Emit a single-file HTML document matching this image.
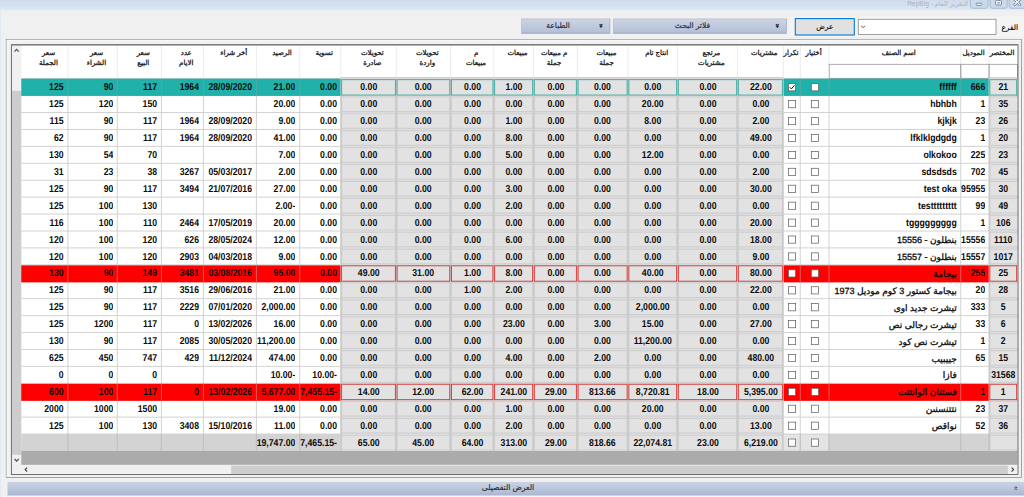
<!DOCTYPE html>
<html lang="ar"><head><meta charset="utf-8"><title>RepBig</title><style>
html,body{margin:0;padding:0;background:#f0f0f0;}
body{width:1024px;height:497px;overflow:hidden;position:relative;font-family:"Liberation Sans","DejaVu Sans",sans-serif;}
svg{position:absolute;left:0;top:0;}
.t{position:absolute;white-space:nowrap;overflow:hidden;color:#000;}
.h{font-size:7px;text-align:center;color:#151515;direction:rtl;-webkit-text-stroke:0.28px #151515;}
.d{font-size:10px;font-weight:bold;letter-spacing:0;color:#0a0a0a;transform:scaleX(0.87);text-rendering:geometricPrecision;}
.c{text-align:center;transform-origin:50% 50%;}
.r{text-align:right;transform-origin:100% 50%;}
.a{direction:rtl;text-align:right;font-weight:normal;font-size:9px;letter-spacing:0;-webkit-text-stroke:0.3px #0a0a0a;transform:none;}
.lb{font-size:7.4px;text-align:right;direction:rtl;-webkit-text-stroke:0.15px #111;width:auto}
.bt{font-size:7.2px;text-align:center;direction:rtl;-webkit-text-stroke:0.15px #111;}
.gb{font-size:7.5px;text-align:center;direction:rtl;color:#2d3342;-webkit-text-stroke:0.2px #2d3342;}
.ti{font-size:6.6px;text-align:right;color:#a9b1bf;direction:rtl;}
</style></head>
<body>
<svg width="1024" height="497" viewBox="0 0 1024 497">
<defs>
<linearGradient id="gb" x1="0" y1="0" x2="0" y2="1"><stop offset="0" stop-color="#ccd4e5"/><stop offset="0.5" stop-color="#c0c9dd"/><stop offset="1" stop-color="#b3bed5"/></linearGradient>
<linearGradient id="gc" x1="0" y1="0" x2="0" y2="1"><stop offset="0" stop-color="#cad3e4"/><stop offset="0.5" stop-color="#bcc6db"/><stop offset="1" stop-color="#a9b6d0"/></linearGradient>
<linearGradient id="gt" x1="0" y1="0" x2="0" y2="1"><stop offset="0" stop-color="#cfdbec"/><stop offset="1" stop-color="#dce6f3"/></linearGradient>
</defs>
<rect x="0.00" y="0.00" width="1024.00" height="497.00" fill="#f0f0f0" />
<rect x="0.00" y="0.00" width="1024.00" height="9.90" fill="url(#gt)" />
<rect x="0.00" y="9.90" width="1024.00" height="0.60" fill="#e8eef6" />
<rect x="0.00" y="9.50" width="0.90" height="497.00" fill="#dfe8f4" />
<path d="M970.4 -2 V6 Q970.4 8.3 972.6999999999999 8.3 H985.7 Q988 8.3 988 6 V-2 Z" fill="#cad9ec" stroke="#9fb3cf" stroke-width="0.8"/>
<path d="M990.2 -2 V6 Q990.2 8.3 992.5 8.3 H1004.9000000000001 Q1007.2 8.3 1007.2 6 V-2 Z" fill="#cad9ec" stroke="#9fb3cf" stroke-width="0.8"/>
<path d="M1009.2 -2 V6 Q1009.2 8.3 1011.5 8.3 H1027.7 Q1030 8.3 1030 6 V-2 Z" fill="#cad9ec" stroke="#9fb3cf" stroke-width="0.8"/>
<rect x="976.3" y="3.2" width="5.6" height="2.1" rx="0.6" fill="#fff" stroke="#6d7890" stroke-width="0.8"/>
<rect x="995.6" y="0.4" width="5.8" height="4.6" rx="0.8" fill="#fff" stroke="#6d7890" stroke-width="0.9"/><rect x="997.3" y="2.2" width="2.4" height="1.2" fill="#6d7890"/>
<path d="M1014.8 -0.5 L1019.8 4.6 M1019.8 -0.5 L1014.8 4.6" stroke="#6d7890" stroke-width="2.6" stroke-linecap="round"/><path d="M1014.8 -0.5 L1019.8 4.6 M1019.8 -0.5 L1014.8 4.6" stroke="#fff" stroke-width="1.2" stroke-linecap="round"/>
<rect x="790.50" y="16.50" width="234.00" height="20.50" fill="#f4f4f4" />
<rect x="858.25" y="19.25" width="137.75" height="15.25" fill="#fff" stroke="#7a7a7a" stroke-width="0.7"/>
<path d="M861.1 25.7 L863.1 27.7 L865.1 25.7" fill="none" stroke="#333" stroke-width="0.85"/>
<rect x="795.30" y="18.60" width="59.00" height="16.40" fill="#e1e1e1" stroke="#0078d7" stroke-width="1.1"/>
<rect x="613.30" y="18.90" width="173.20" height="14.30" fill="url(#gb)" stroke="#aab4c8" stroke-width="0.5"/>
<line x1="613.50" y1="33.20" x2="786.50" y2="33.20" stroke="#98a4bd" stroke-width="0.7" />
<line x1="786.40" y1="19.20" x2="786.40" y2="33.30" stroke="#a3aec5" stroke-width="0.6" />
<rect x="521.40" y="18.90" width="88.50" height="14.30" fill="url(#gb)" stroke="#aab4c8" stroke-width="0.5"/>
<line x1="521.60" y1="33.20" x2="609.90" y2="33.20" stroke="#98a4bd" stroke-width="0.7" />
<line x1="609.80" y1="19.20" x2="609.80" y2="33.30" stroke="#a3aec5" stroke-width="0.6" />
<path d="M775.90 24.10 L777.30 25.50 L778.70 24.10 M775.90 25.90 L777.30 27.30 L778.70 25.90" fill="none" stroke="#2a3040" stroke-width="1.15"/>
<path d="M599.60 24.10 L601.00 25.50 L602.40 24.10 M599.60 25.90 L601.00 27.30 L602.40 25.90" fill="none" stroke="#2a3040" stroke-width="1.15"/>
<rect x="6.25" y="39.40" width="1015.20" height="438.10" fill="#f1f1f1" stroke="#8f8f8f" stroke-width="0.8"/>
<line x1="6.90" y1="40.15" x2="1021.00" y2="40.15" stroke="#ffffff" stroke-width="0.6" />
<line x1="7.00" y1="40.00" x2="7.00" y2="477.00" stroke="#ffffff" stroke-width="0.6" />
<rect x="11.40" y="44.60" width="1006.60" height="429.90" fill="#ffffff" />
<rect x="11.90" y="45.20" width="9.35" height="429.00" fill="#f0f0f0" />
<rect x="11.90" y="90.80" width="9.35" height="364.00" fill="#cdcdcd" />
<path d="M14.5 51.6 L16.6 49.4 L18.7 51.6" fill="none" stroke="#505050" stroke-width="1.2"/>
<path d="M14.5 459 L16.6 461.2 L18.7 459" fill="none" stroke="#505050" stroke-width="1.2"/>
<rect x="21.25" y="434.06" width="996.25" height="17.22" fill="#d3d3d3" />
<rect x="340.75" y="78.70" width="442.50" height="372.28" fill="#e2e2e2" />
<rect x="989.00" y="78.70" width="28.50" height="372.28" fill="#e2e2e2" />
<rect x="783.25" y="434.06" width="45.75" height="16.92" fill="#e4e4e4" />
<line x1="67.90" y1="45.20" x2="67.90" y2="78.70" stroke="#e6e6e6" stroke-width="0.8" />
<line x1="117.25" y1="45.20" x2="117.25" y2="78.70" stroke="#e6e6e6" stroke-width="0.8" />
<line x1="161.40" y1="45.20" x2="161.40" y2="78.70" stroke="#e6e6e6" stroke-width="0.8" />
<line x1="203.40" y1="45.20" x2="203.40" y2="78.70" stroke="#e6e6e6" stroke-width="0.8" />
<line x1="256.40" y1="45.20" x2="256.40" y2="78.70" stroke="#e6e6e6" stroke-width="0.8" />
<line x1="299.75" y1="45.20" x2="299.75" y2="78.70" stroke="#e6e6e6" stroke-width="0.8" />
<line x1="340.75" y1="45.20" x2="340.75" y2="78.70" stroke="#e6e6e6" stroke-width="0.8" />
<line x1="396.25" y1="45.20" x2="396.25" y2="78.70" stroke="#e6e6e6" stroke-width="0.8" />
<line x1="450.60" y1="45.20" x2="450.60" y2="78.70" stroke="#e6e6e6" stroke-width="0.8" />
<line x1="493.75" y1="45.20" x2="493.75" y2="78.70" stroke="#e6e6e6" stroke-width="0.8" />
<line x1="533.50" y1="45.20" x2="533.50" y2="78.70" stroke="#e6e6e6" stroke-width="0.8" />
<line x1="577.25" y1="45.20" x2="577.25" y2="78.70" stroke="#e6e6e6" stroke-width="0.8" />
<line x1="628.00" y1="45.20" x2="628.00" y2="78.70" stroke="#e6e6e6" stroke-width="0.8" />
<line x1="677.50" y1="45.20" x2="677.50" y2="78.70" stroke="#e6e6e6" stroke-width="0.8" />
<line x1="737.50" y1="45.20" x2="737.50" y2="78.70" stroke="#e6e6e6" stroke-width="0.8" />
<line x1="783.25" y1="45.20" x2="783.25" y2="78.70" stroke="#e6e6e6" stroke-width="0.8" />
<line x1="800.25" y1="45.20" x2="800.25" y2="78.70" stroke="#e6e6e6" stroke-width="0.8" />
<line x1="829.00" y1="45.20" x2="829.00" y2="64.20" stroke="#e6e6e6" stroke-width="0.8" />
<line x1="960.75" y1="45.20" x2="960.75" y2="64.20" stroke="#e6e6e6" stroke-width="0.8" />
<line x1="989.00" y1="45.20" x2="989.00" y2="64.20" stroke="#e6e6e6" stroke-width="0.8" />
<rect x="829.20" y="64.30" width="131.55" height="14.00" fill="#fff" stroke="#989898" stroke-width="0.8"/>
<rect x="960.95" y="64.30" width="28.05" height="14.00" fill="#fff" stroke="#989898" stroke-width="0.8"/>
<rect x="989.20" y="64.30" width="28.30" height="14.00" fill="#fff" stroke="#989898" stroke-width="0.8"/>
<line x1="21.25" y1="78.70" x2="1017.50" y2="78.70" stroke="#9a9a9a" stroke-width="0.6" />
<line x1="21.25" y1="95.62" x2="1017.50" y2="95.62" stroke="#d2d2d2" stroke-width="1.0" />
<line x1="21.25" y1="112.54" x2="1017.50" y2="112.54" stroke="#d2d2d2" stroke-width="1.0" />
<line x1="21.25" y1="129.47" x2="1017.50" y2="129.47" stroke="#d2d2d2" stroke-width="1.0" />
<line x1="21.25" y1="146.39" x2="1017.50" y2="146.39" stroke="#d2d2d2" stroke-width="1.0" />
<line x1="21.25" y1="163.31" x2="1017.50" y2="163.31" stroke="#d2d2d2" stroke-width="1.0" />
<line x1="21.25" y1="180.23" x2="1017.50" y2="180.23" stroke="#d2d2d2" stroke-width="1.0" />
<line x1="21.25" y1="197.15" x2="1017.50" y2="197.15" stroke="#d2d2d2" stroke-width="1.0" />
<line x1="21.25" y1="214.08" x2="1017.50" y2="214.08" stroke="#d2d2d2" stroke-width="1.0" />
<line x1="21.25" y1="231.00" x2="1017.50" y2="231.00" stroke="#d2d2d2" stroke-width="1.0" />
<line x1="21.25" y1="247.92" x2="1017.50" y2="247.92" stroke="#d2d2d2" stroke-width="1.0" />
<line x1="21.25" y1="264.84" x2="1017.50" y2="264.84" stroke="#d2d2d2" stroke-width="1.0" />
<line x1="21.25" y1="281.76" x2="1017.50" y2="281.76" stroke="#d2d2d2" stroke-width="1.0" />
<line x1="21.25" y1="298.69" x2="1017.50" y2="298.69" stroke="#d2d2d2" stroke-width="1.0" />
<line x1="21.25" y1="315.61" x2="1017.50" y2="315.61" stroke="#d2d2d2" stroke-width="1.0" />
<line x1="21.25" y1="332.53" x2="1017.50" y2="332.53" stroke="#d2d2d2" stroke-width="1.0" />
<line x1="21.25" y1="349.45" x2="1017.50" y2="349.45" stroke="#d2d2d2" stroke-width="1.0" />
<line x1="21.25" y1="366.37" x2="1017.50" y2="366.37" stroke="#d2d2d2" stroke-width="1.0" />
<line x1="21.25" y1="383.30" x2="1017.50" y2="383.30" stroke="#d2d2d2" stroke-width="1.0" />
<line x1="21.25" y1="400.22" x2="1017.50" y2="400.22" stroke="#d2d2d2" stroke-width="1.0" />
<line x1="21.25" y1="417.14" x2="1017.50" y2="417.14" stroke="#d2d2d2" stroke-width="1.0" />
<line x1="21.25" y1="434.06" x2="1017.50" y2="434.06" stroke="#d2d2d2" stroke-width="1.0" />
<line x1="21.25" y1="450.98" x2="1017.50" y2="450.98" stroke="#d2d2d2" stroke-width="1.0" />
<line x1="67.90" y1="78.70" x2="67.90" y2="450.98" stroke="#d2d2d2" stroke-width="1.0" />
<line x1="117.25" y1="78.70" x2="117.25" y2="450.98" stroke="#d2d2d2" stroke-width="1.0" />
<line x1="161.40" y1="78.70" x2="161.40" y2="450.98" stroke="#d2d2d2" stroke-width="1.0" />
<line x1="203.40" y1="78.70" x2="203.40" y2="450.98" stroke="#d2d2d2" stroke-width="1.0" />
<line x1="256.40" y1="78.70" x2="256.40" y2="450.98" stroke="#d2d2d2" stroke-width="1.0" />
<line x1="299.75" y1="78.70" x2="299.75" y2="450.98" stroke="#d2d2d2" stroke-width="1.0" />
<line x1="340.75" y1="78.70" x2="340.75" y2="450.98" stroke="#d2d2d2" stroke-width="1.0" />
<line x1="396.25" y1="78.70" x2="396.25" y2="450.98" stroke="#d2d2d2" stroke-width="1.0" />
<line x1="450.60" y1="78.70" x2="450.60" y2="450.98" stroke="#d2d2d2" stroke-width="1.0" />
<line x1="493.75" y1="78.70" x2="493.75" y2="450.98" stroke="#d2d2d2" stroke-width="1.0" />
<line x1="533.50" y1="78.70" x2="533.50" y2="450.98" stroke="#d2d2d2" stroke-width="1.0" />
<line x1="577.25" y1="78.70" x2="577.25" y2="450.98" stroke="#d2d2d2" stroke-width="1.0" />
<line x1="628.00" y1="78.70" x2="628.00" y2="450.98" stroke="#d2d2d2" stroke-width="1.0" />
<line x1="677.50" y1="78.70" x2="677.50" y2="450.98" stroke="#d2d2d2" stroke-width="1.0" />
<line x1="737.50" y1="78.70" x2="737.50" y2="450.98" stroke="#d2d2d2" stroke-width="1.0" />
<line x1="783.25" y1="78.70" x2="783.25" y2="450.98" stroke="#d2d2d2" stroke-width="1.0" />
<line x1="800.25" y1="78.70" x2="800.25" y2="450.98" stroke="#d2d2d2" stroke-width="1.0" />
<line x1="829.00" y1="78.70" x2="829.00" y2="450.98" stroke="#d2d2d2" stroke-width="1.0" />
<line x1="960.75" y1="78.70" x2="960.75" y2="450.98" stroke="#d2d2d2" stroke-width="1.0" />
<line x1="989.00" y1="78.70" x2="989.00" y2="450.98" stroke="#d2d2d2" stroke-width="1.0" />
<line x1="340.75" y1="78.80" x2="783.25" y2="78.80" stroke="#cecece" stroke-width="3.4" />
<line x1="340.75" y1="78.80" x2="783.25" y2="78.80" stroke="#dcdcdc" stroke-width="1.5" />
<line x1="989.00" y1="78.80" x2="1017.50" y2="78.80" stroke="#cecece" stroke-width="3.4" />
<line x1="989.00" y1="78.80" x2="1017.50" y2="78.80" stroke="#dcdcdc" stroke-width="1.5" />
<line x1="340.75" y1="95.72" x2="783.25" y2="95.72" stroke="#cecece" stroke-width="3.4" />
<line x1="340.75" y1="95.72" x2="783.25" y2="95.72" stroke="#dcdcdc" stroke-width="1.5" />
<line x1="989.00" y1="95.72" x2="1017.50" y2="95.72" stroke="#cecece" stroke-width="3.4" />
<line x1="989.00" y1="95.72" x2="1017.50" y2="95.72" stroke="#dcdcdc" stroke-width="1.5" />
<line x1="340.75" y1="112.64" x2="783.25" y2="112.64" stroke="#cecece" stroke-width="3.4" />
<line x1="340.75" y1="112.64" x2="783.25" y2="112.64" stroke="#dcdcdc" stroke-width="1.5" />
<line x1="989.00" y1="112.64" x2="1017.50" y2="112.64" stroke="#cecece" stroke-width="3.4" />
<line x1="989.00" y1="112.64" x2="1017.50" y2="112.64" stroke="#dcdcdc" stroke-width="1.5" />
<line x1="340.75" y1="129.57" x2="783.25" y2="129.57" stroke="#cecece" stroke-width="3.4" />
<line x1="340.75" y1="129.57" x2="783.25" y2="129.57" stroke="#dcdcdc" stroke-width="1.5" />
<line x1="989.00" y1="129.57" x2="1017.50" y2="129.57" stroke="#cecece" stroke-width="3.4" />
<line x1="989.00" y1="129.57" x2="1017.50" y2="129.57" stroke="#dcdcdc" stroke-width="1.5" />
<line x1="340.75" y1="146.49" x2="783.25" y2="146.49" stroke="#cecece" stroke-width="3.4" />
<line x1="340.75" y1="146.49" x2="783.25" y2="146.49" stroke="#dcdcdc" stroke-width="1.5" />
<line x1="989.00" y1="146.49" x2="1017.50" y2="146.49" stroke="#cecece" stroke-width="3.4" />
<line x1="989.00" y1="146.49" x2="1017.50" y2="146.49" stroke="#dcdcdc" stroke-width="1.5" />
<line x1="340.75" y1="163.41" x2="783.25" y2="163.41" stroke="#cecece" stroke-width="3.4" />
<line x1="340.75" y1="163.41" x2="783.25" y2="163.41" stroke="#dcdcdc" stroke-width="1.5" />
<line x1="989.00" y1="163.41" x2="1017.50" y2="163.41" stroke="#cecece" stroke-width="3.4" />
<line x1="989.00" y1="163.41" x2="1017.50" y2="163.41" stroke="#dcdcdc" stroke-width="1.5" />
<line x1="340.75" y1="180.33" x2="783.25" y2="180.33" stroke="#cecece" stroke-width="3.4" />
<line x1="340.75" y1="180.33" x2="783.25" y2="180.33" stroke="#dcdcdc" stroke-width="1.5" />
<line x1="989.00" y1="180.33" x2="1017.50" y2="180.33" stroke="#cecece" stroke-width="3.4" />
<line x1="989.00" y1="180.33" x2="1017.50" y2="180.33" stroke="#dcdcdc" stroke-width="1.5" />
<line x1="340.75" y1="197.25" x2="783.25" y2="197.25" stroke="#cecece" stroke-width="3.4" />
<line x1="340.75" y1="197.25" x2="783.25" y2="197.25" stroke="#dcdcdc" stroke-width="1.5" />
<line x1="989.00" y1="197.25" x2="1017.50" y2="197.25" stroke="#cecece" stroke-width="3.4" />
<line x1="989.00" y1="197.25" x2="1017.50" y2="197.25" stroke="#dcdcdc" stroke-width="1.5" />
<line x1="340.75" y1="214.18" x2="783.25" y2="214.18" stroke="#cecece" stroke-width="3.4" />
<line x1="340.75" y1="214.18" x2="783.25" y2="214.18" stroke="#dcdcdc" stroke-width="1.5" />
<line x1="989.00" y1="214.18" x2="1017.50" y2="214.18" stroke="#cecece" stroke-width="3.4" />
<line x1="989.00" y1="214.18" x2="1017.50" y2="214.18" stroke="#dcdcdc" stroke-width="1.5" />
<line x1="340.75" y1="231.10" x2="783.25" y2="231.10" stroke="#cecece" stroke-width="3.4" />
<line x1="340.75" y1="231.10" x2="783.25" y2="231.10" stroke="#dcdcdc" stroke-width="1.5" />
<line x1="989.00" y1="231.10" x2="1017.50" y2="231.10" stroke="#cecece" stroke-width="3.4" />
<line x1="989.00" y1="231.10" x2="1017.50" y2="231.10" stroke="#dcdcdc" stroke-width="1.5" />
<line x1="340.75" y1="248.02" x2="783.25" y2="248.02" stroke="#cecece" stroke-width="3.4" />
<line x1="340.75" y1="248.02" x2="783.25" y2="248.02" stroke="#dcdcdc" stroke-width="1.5" />
<line x1="989.00" y1="248.02" x2="1017.50" y2="248.02" stroke="#cecece" stroke-width="3.4" />
<line x1="989.00" y1="248.02" x2="1017.50" y2="248.02" stroke="#dcdcdc" stroke-width="1.5" />
<line x1="340.75" y1="264.94" x2="783.25" y2="264.94" stroke="#cecece" stroke-width="3.4" />
<line x1="340.75" y1="264.94" x2="783.25" y2="264.94" stroke="#dcdcdc" stroke-width="1.5" />
<line x1="989.00" y1="264.94" x2="1017.50" y2="264.94" stroke="#cecece" stroke-width="3.4" />
<line x1="989.00" y1="264.94" x2="1017.50" y2="264.94" stroke="#dcdcdc" stroke-width="1.5" />
<line x1="340.75" y1="281.86" x2="783.25" y2="281.86" stroke="#cecece" stroke-width="3.4" />
<line x1="340.75" y1="281.86" x2="783.25" y2="281.86" stroke="#dcdcdc" stroke-width="1.5" />
<line x1="989.00" y1="281.86" x2="1017.50" y2="281.86" stroke="#cecece" stroke-width="3.4" />
<line x1="989.00" y1="281.86" x2="1017.50" y2="281.86" stroke="#dcdcdc" stroke-width="1.5" />
<line x1="340.75" y1="298.79" x2="783.25" y2="298.79" stroke="#cecece" stroke-width="3.4" />
<line x1="340.75" y1="298.79" x2="783.25" y2="298.79" stroke="#dcdcdc" stroke-width="1.5" />
<line x1="989.00" y1="298.79" x2="1017.50" y2="298.79" stroke="#cecece" stroke-width="3.4" />
<line x1="989.00" y1="298.79" x2="1017.50" y2="298.79" stroke="#dcdcdc" stroke-width="1.5" />
<line x1="340.75" y1="315.71" x2="783.25" y2="315.71" stroke="#cecece" stroke-width="3.4" />
<line x1="340.75" y1="315.71" x2="783.25" y2="315.71" stroke="#dcdcdc" stroke-width="1.5" />
<line x1="989.00" y1="315.71" x2="1017.50" y2="315.71" stroke="#cecece" stroke-width="3.4" />
<line x1="989.00" y1="315.71" x2="1017.50" y2="315.71" stroke="#dcdcdc" stroke-width="1.5" />
<line x1="340.75" y1="332.63" x2="783.25" y2="332.63" stroke="#cecece" stroke-width="3.4" />
<line x1="340.75" y1="332.63" x2="783.25" y2="332.63" stroke="#dcdcdc" stroke-width="1.5" />
<line x1="989.00" y1="332.63" x2="1017.50" y2="332.63" stroke="#cecece" stroke-width="3.4" />
<line x1="989.00" y1="332.63" x2="1017.50" y2="332.63" stroke="#dcdcdc" stroke-width="1.5" />
<line x1="340.75" y1="349.55" x2="783.25" y2="349.55" stroke="#cecece" stroke-width="3.4" />
<line x1="340.75" y1="349.55" x2="783.25" y2="349.55" stroke="#dcdcdc" stroke-width="1.5" />
<line x1="989.00" y1="349.55" x2="1017.50" y2="349.55" stroke="#cecece" stroke-width="3.4" />
<line x1="989.00" y1="349.55" x2="1017.50" y2="349.55" stroke="#dcdcdc" stroke-width="1.5" />
<line x1="340.75" y1="366.47" x2="783.25" y2="366.47" stroke="#cecece" stroke-width="3.4" />
<line x1="340.75" y1="366.47" x2="783.25" y2="366.47" stroke="#dcdcdc" stroke-width="1.5" />
<line x1="989.00" y1="366.47" x2="1017.50" y2="366.47" stroke="#cecece" stroke-width="3.4" />
<line x1="989.00" y1="366.47" x2="1017.50" y2="366.47" stroke="#dcdcdc" stroke-width="1.5" />
<line x1="340.75" y1="383.40" x2="783.25" y2="383.40" stroke="#cecece" stroke-width="3.4" />
<line x1="340.75" y1="383.40" x2="783.25" y2="383.40" stroke="#dcdcdc" stroke-width="1.5" />
<line x1="989.00" y1="383.40" x2="1017.50" y2="383.40" stroke="#cecece" stroke-width="3.4" />
<line x1="989.00" y1="383.40" x2="1017.50" y2="383.40" stroke="#dcdcdc" stroke-width="1.5" />
<line x1="340.75" y1="400.32" x2="783.25" y2="400.32" stroke="#cecece" stroke-width="3.4" />
<line x1="340.75" y1="400.32" x2="783.25" y2="400.32" stroke="#dcdcdc" stroke-width="1.5" />
<line x1="989.00" y1="400.32" x2="1017.50" y2="400.32" stroke="#cecece" stroke-width="3.4" />
<line x1="989.00" y1="400.32" x2="1017.50" y2="400.32" stroke="#dcdcdc" stroke-width="1.5" />
<line x1="340.75" y1="417.24" x2="783.25" y2="417.24" stroke="#cecece" stroke-width="3.4" />
<line x1="340.75" y1="417.24" x2="783.25" y2="417.24" stroke="#dcdcdc" stroke-width="1.5" />
<line x1="989.00" y1="417.24" x2="1017.50" y2="417.24" stroke="#cecece" stroke-width="3.4" />
<line x1="989.00" y1="417.24" x2="1017.50" y2="417.24" stroke="#dcdcdc" stroke-width="1.5" />
<line x1="340.75" y1="434.16" x2="783.25" y2="434.16" stroke="#cecece" stroke-width="3.4" />
<line x1="340.75" y1="434.16" x2="783.25" y2="434.16" stroke="#dcdcdc" stroke-width="1.5" />
<line x1="989.00" y1="434.16" x2="1017.50" y2="434.16" stroke="#cecece" stroke-width="3.4" />
<line x1="989.00" y1="434.16" x2="1017.50" y2="434.16" stroke="#dcdcdc" stroke-width="1.5" />
<line x1="340.75" y1="451.08" x2="783.25" y2="451.08" stroke="#cecece" stroke-width="3.4" />
<line x1="340.75" y1="451.08" x2="783.25" y2="451.08" stroke="#dcdcdc" stroke-width="1.5" />
<line x1="989.00" y1="451.08" x2="1017.50" y2="451.08" stroke="#cecece" stroke-width="3.4" />
<line x1="989.00" y1="451.08" x2="1017.50" y2="451.08" stroke="#dcdcdc" stroke-width="1.5" />
<line x1="341.35" y1="78.70" x2="341.35" y2="450.98" stroke="#cbcbcb" stroke-width="1.6" />
<line x1="396.25" y1="78.70" x2="396.25" y2="450.98" stroke="#cbcbcb" stroke-width="2.6" />
<line x1="450.60" y1="78.70" x2="450.60" y2="450.98" stroke="#cbcbcb" stroke-width="2.6" />
<line x1="493.75" y1="78.70" x2="493.75" y2="450.98" stroke="#cbcbcb" stroke-width="2.6" />
<line x1="533.50" y1="78.70" x2="533.50" y2="450.98" stroke="#cbcbcb" stroke-width="2.6" />
<line x1="577.25" y1="78.70" x2="577.25" y2="450.98" stroke="#cbcbcb" stroke-width="2.6" />
<line x1="628.00" y1="78.70" x2="628.00" y2="450.98" stroke="#cbcbcb" stroke-width="2.6" />
<line x1="677.50" y1="78.70" x2="677.50" y2="450.98" stroke="#cbcbcb" stroke-width="2.6" />
<line x1="737.50" y1="78.70" x2="737.50" y2="450.98" stroke="#cbcbcb" stroke-width="2.6" />
<line x1="782.65" y1="78.70" x2="782.65" y2="450.98" stroke="#cbcbcb" stroke-width="1.6" />
<line x1="989.60" y1="78.70" x2="989.60" y2="450.98" stroke="#cbcbcb" stroke-width="1.6" />
<line x1="67.90" y1="434.06" x2="67.90" y2="450.98" stroke="#bcbcbc" stroke-width="0.9" />
<line x1="117.25" y1="434.06" x2="117.25" y2="450.98" stroke="#bcbcbc" stroke-width="0.9" />
<line x1="161.40" y1="434.06" x2="161.40" y2="450.98" stroke="#bcbcbc" stroke-width="0.9" />
<line x1="203.40" y1="434.06" x2="203.40" y2="450.98" stroke="#bcbcbc" stroke-width="0.9" />
<line x1="256.40" y1="434.06" x2="256.40" y2="450.98" stroke="#bcbcbc" stroke-width="0.9" />
<line x1="299.75" y1="434.06" x2="299.75" y2="450.98" stroke="#bcbcbc" stroke-width="0.9" />
<line x1="800.25" y1="434.06" x2="800.25" y2="450.98" stroke="#bcbcbc" stroke-width="0.9" />
<line x1="829.00" y1="434.06" x2="829.00" y2="450.98" stroke="#bcbcbc" stroke-width="0.9" />
<line x1="960.75" y1="434.06" x2="960.75" y2="450.98" stroke="#bcbcbc" stroke-width="0.9" />
<line x1="989.00" y1="434.06" x2="989.00" y2="450.98" stroke="#bcbcbc" stroke-width="0.9" />
<rect x="21.25" y="78.70" width="319.20" height="17.22" fill="#20b2aa" />
<rect x="783.65" y="78.70" width="205.05" height="17.22" fill="#20b2aa" />
<rect x="21.25" y="265.34" width="319.20" height="17.02" fill="#ff0000" />
<rect x="783.65" y="265.34" width="205.05" height="17.02" fill="#ff0000" />
<rect x="21.25" y="383.80" width="319.20" height="17.02" fill="#ff0000" />
<rect x="783.65" y="383.80" width="205.05" height="17.02" fill="#ff0000" />
<rect x="341.60" y="79.65" width="53.80" height="15.42" fill="#e2e2e2" stroke="#48ada5" stroke-width="1.0"/>
<rect x="397.10" y="79.65" width="52.65" height="15.42" fill="#e2e2e2" stroke="#48ada5" stroke-width="1.0"/>
<rect x="451.45" y="79.65" width="41.45" height="15.42" fill="#e2e2e2" stroke="#48ada5" stroke-width="1.0"/>
<rect x="494.60" y="79.65" width="38.05" height="15.42" fill="#e2e2e2" stroke="#48ada5" stroke-width="1.0"/>
<rect x="534.35" y="79.65" width="42.05" height="15.42" fill="#e2e2e2" stroke="#48ada5" stroke-width="1.0"/>
<rect x="578.10" y="79.65" width="49.05" height="15.42" fill="#e2e2e2" stroke="#48ada5" stroke-width="1.0"/>
<rect x="628.85" y="79.65" width="47.80" height="15.42" fill="#e2e2e2" stroke="#48ada5" stroke-width="1.0"/>
<rect x="678.35" y="79.65" width="58.30" height="15.42" fill="#e2e2e2" stroke="#48ada5" stroke-width="1.0"/>
<rect x="738.35" y="79.65" width="44.05" height="15.42" fill="#e2e2e2" stroke="#48ada5" stroke-width="1.0"/>
<rect x="989.85" y="79.65" width="26.80" height="15.42" fill="#e2e2e2" stroke="#48ada5" stroke-width="1.0"/>
<rect x="341.60" y="265.79" width="53.80" height="15.42" fill="#e2e2e2" stroke="#d63a3a" stroke-width="0.95"/>
<rect x="397.10" y="265.79" width="52.65" height="15.42" fill="#e2e2e2" stroke="#d63a3a" stroke-width="0.95"/>
<rect x="451.45" y="265.79" width="41.45" height="15.42" fill="#e2e2e2" stroke="#d63a3a" stroke-width="0.95"/>
<rect x="494.60" y="265.79" width="38.05" height="15.42" fill="#e2e2e2" stroke="#d63a3a" stroke-width="0.95"/>
<rect x="534.35" y="265.79" width="42.05" height="15.42" fill="#e2e2e2" stroke="#d63a3a" stroke-width="0.95"/>
<rect x="578.10" y="265.79" width="49.05" height="15.42" fill="#e2e2e2" stroke="#d63a3a" stroke-width="0.95"/>
<rect x="628.85" y="265.79" width="47.80" height="15.42" fill="#e2e2e2" stroke="#d63a3a" stroke-width="0.95"/>
<rect x="678.35" y="265.79" width="58.30" height="15.42" fill="#e2e2e2" stroke="#d63a3a" stroke-width="0.95"/>
<rect x="738.35" y="265.79" width="44.05" height="15.42" fill="#e2e2e2" stroke="#d63a3a" stroke-width="0.95"/>
<rect x="989.85" y="265.79" width="26.80" height="15.42" fill="#e2e2e2" stroke="#d63a3a" stroke-width="0.95"/>
<rect x="341.60" y="384.25" width="53.80" height="15.42" fill="#e2e2e2" stroke="#d63a3a" stroke-width="0.95"/>
<rect x="397.10" y="384.25" width="52.65" height="15.42" fill="#e2e2e2" stroke="#d63a3a" stroke-width="0.95"/>
<rect x="451.45" y="384.25" width="41.45" height="15.42" fill="#e2e2e2" stroke="#d63a3a" stroke-width="0.95"/>
<rect x="494.60" y="384.25" width="38.05" height="15.42" fill="#e2e2e2" stroke="#d63a3a" stroke-width="0.95"/>
<rect x="534.35" y="384.25" width="42.05" height="15.42" fill="#e2e2e2" stroke="#d63a3a" stroke-width="0.95"/>
<rect x="578.10" y="384.25" width="49.05" height="15.42" fill="#e2e2e2" stroke="#d63a3a" stroke-width="0.95"/>
<rect x="628.85" y="384.25" width="47.80" height="15.42" fill="#e2e2e2" stroke="#d63a3a" stroke-width="0.95"/>
<rect x="678.35" y="384.25" width="58.30" height="15.42" fill="#e2e2e2" stroke="#d63a3a" stroke-width="0.95"/>
<rect x="738.35" y="384.25" width="44.05" height="15.42" fill="#e2e2e2" stroke="#d63a3a" stroke-width="0.95"/>
<rect x="989.85" y="384.25" width="26.80" height="15.42" fill="#e2e2e2" stroke="#d63a3a" stroke-width="0.95"/>
<line x1="67.90" y1="79.20" x2="67.90" y2="96.12" stroke="#55aaa3" stroke-width="0.9" />
<line x1="117.25" y1="79.20" x2="117.25" y2="96.12" stroke="#55aaa3" stroke-width="0.9" />
<line x1="161.40" y1="79.20" x2="161.40" y2="96.12" stroke="#55aaa3" stroke-width="0.9" />
<line x1="203.40" y1="79.20" x2="203.40" y2="96.12" stroke="#55aaa3" stroke-width="0.9" />
<line x1="256.40" y1="79.20" x2="256.40" y2="96.12" stroke="#55aaa3" stroke-width="0.9" />
<line x1="299.75" y1="79.20" x2="299.75" y2="96.12" stroke="#55aaa3" stroke-width="0.9" />
<line x1="800.25" y1="79.20" x2="800.25" y2="96.12" stroke="#55aaa3" stroke-width="0.9" />
<line x1="829.00" y1="79.20" x2="829.00" y2="96.12" stroke="#55aaa3" stroke-width="0.9" />
<line x1="960.75" y1="79.20" x2="960.75" y2="96.12" stroke="#55aaa3" stroke-width="0.9" />
<line x1="67.90" y1="265.34" x2="67.90" y2="282.26" stroke="#d96262" stroke-width="0.9" />
<line x1="117.25" y1="265.34" x2="117.25" y2="282.26" stroke="#d96262" stroke-width="0.9" />
<line x1="161.40" y1="265.34" x2="161.40" y2="282.26" stroke="#d96262" stroke-width="0.9" />
<line x1="203.40" y1="265.34" x2="203.40" y2="282.26" stroke="#d96262" stroke-width="0.9" />
<line x1="256.40" y1="265.34" x2="256.40" y2="282.26" stroke="#d96262" stroke-width="0.9" />
<line x1="299.75" y1="265.34" x2="299.75" y2="282.26" stroke="#d96262" stroke-width="0.9" />
<line x1="800.25" y1="265.34" x2="800.25" y2="282.26" stroke="#d96262" stroke-width="0.9" />
<line x1="829.00" y1="265.34" x2="829.00" y2="282.26" stroke="#d96262" stroke-width="0.9" />
<line x1="960.75" y1="265.34" x2="960.75" y2="282.26" stroke="#d96262" stroke-width="0.9" />
<line x1="67.90" y1="383.80" x2="67.90" y2="400.72" stroke="#d96262" stroke-width="0.9" />
<line x1="117.25" y1="383.80" x2="117.25" y2="400.72" stroke="#d96262" stroke-width="0.9" />
<line x1="161.40" y1="383.80" x2="161.40" y2="400.72" stroke="#d96262" stroke-width="0.9" />
<line x1="203.40" y1="383.80" x2="203.40" y2="400.72" stroke="#d96262" stroke-width="0.9" />
<line x1="256.40" y1="383.80" x2="256.40" y2="400.72" stroke="#d96262" stroke-width="0.9" />
<line x1="299.75" y1="383.80" x2="299.75" y2="400.72" stroke="#d96262" stroke-width="0.9" />
<line x1="800.25" y1="383.80" x2="800.25" y2="400.72" stroke="#d96262" stroke-width="0.9" />
<line x1="829.00" y1="383.80" x2="829.00" y2="400.72" stroke="#d96262" stroke-width="0.9" />
<line x1="960.75" y1="383.80" x2="960.75" y2="400.72" stroke="#d96262" stroke-width="0.9" />
<rect x="788.45" y="83.66" width="7.20" height="7.20" fill="#fff" stroke="#5a5a5a" stroke-width="0.7"/>
<path d="M789.75 87.16 L791.35 88.96 L794.45 85.16" fill="none" stroke="#222" stroke-width="1"/>
<rect x="811.32" y="83.66" width="7.20" height="7.20" fill="#fff" stroke="#5a5a5a" stroke-width="0.7"/>
<rect x="788.45" y="100.58" width="7.20" height="7.20" fill="#fff" stroke="#5a5a5a" stroke-width="0.7"/>
<rect x="811.32" y="100.58" width="7.20" height="7.20" fill="#fff" stroke="#5a5a5a" stroke-width="0.7"/>
<rect x="788.45" y="117.51" width="7.20" height="7.20" fill="#fff" stroke="#5a5a5a" stroke-width="0.7"/>
<rect x="811.32" y="117.51" width="7.20" height="7.20" fill="#fff" stroke="#5a5a5a" stroke-width="0.7"/>
<rect x="788.45" y="134.43" width="7.20" height="7.20" fill="#fff" stroke="#5a5a5a" stroke-width="0.7"/>
<rect x="811.32" y="134.43" width="7.20" height="7.20" fill="#fff" stroke="#5a5a5a" stroke-width="0.7"/>
<rect x="788.45" y="151.35" width="7.20" height="7.20" fill="#fff" stroke="#5a5a5a" stroke-width="0.7"/>
<rect x="811.32" y="151.35" width="7.20" height="7.20" fill="#fff" stroke="#5a5a5a" stroke-width="0.7"/>
<rect x="788.45" y="168.27" width="7.20" height="7.20" fill="#fff" stroke="#5a5a5a" stroke-width="0.7"/>
<rect x="811.32" y="168.27" width="7.20" height="7.20" fill="#fff" stroke="#5a5a5a" stroke-width="0.7"/>
<rect x="788.45" y="185.19" width="7.20" height="7.20" fill="#fff" stroke="#5a5a5a" stroke-width="0.7"/>
<rect x="811.32" y="185.19" width="7.20" height="7.20" fill="#fff" stroke="#5a5a5a" stroke-width="0.7"/>
<rect x="788.45" y="202.12" width="7.20" height="7.20" fill="#fff" stroke="#5a5a5a" stroke-width="0.7"/>
<rect x="811.32" y="202.12" width="7.20" height="7.20" fill="#fff" stroke="#5a5a5a" stroke-width="0.7"/>
<rect x="788.45" y="219.04" width="7.20" height="7.20" fill="#fff" stroke="#5a5a5a" stroke-width="0.7"/>
<rect x="811.32" y="219.04" width="7.20" height="7.20" fill="#fff" stroke="#5a5a5a" stroke-width="0.7"/>
<rect x="788.45" y="235.96" width="7.20" height="7.20" fill="#fff" stroke="#5a5a5a" stroke-width="0.7"/>
<rect x="811.32" y="235.96" width="7.20" height="7.20" fill="#fff" stroke="#5a5a5a" stroke-width="0.7"/>
<rect x="788.45" y="252.88" width="7.20" height="7.20" fill="#fff" stroke="#5a5a5a" stroke-width="0.7"/>
<rect x="811.32" y="252.88" width="7.20" height="7.20" fill="#fff" stroke="#5a5a5a" stroke-width="0.7"/>
<rect x="788.45" y="269.80" width="7.20" height="7.20" fill="#fff" stroke="#5a5a5a" stroke-width="0.7"/>
<rect x="811.32" y="269.80" width="7.20" height="7.20" fill="#fff" stroke="#5a5a5a" stroke-width="0.7"/>
<rect x="788.45" y="286.73" width="7.20" height="7.20" fill="#fff" stroke="#5a5a5a" stroke-width="0.7"/>
<rect x="811.32" y="286.73" width="7.20" height="7.20" fill="#fff" stroke="#5a5a5a" stroke-width="0.7"/>
<rect x="788.45" y="303.65" width="7.20" height="7.20" fill="#fff" stroke="#5a5a5a" stroke-width="0.7"/>
<rect x="811.32" y="303.65" width="7.20" height="7.20" fill="#fff" stroke="#5a5a5a" stroke-width="0.7"/>
<rect x="788.45" y="320.57" width="7.20" height="7.20" fill="#fff" stroke="#5a5a5a" stroke-width="0.7"/>
<rect x="811.32" y="320.57" width="7.20" height="7.20" fill="#fff" stroke="#5a5a5a" stroke-width="0.7"/>
<rect x="788.45" y="337.49" width="7.20" height="7.20" fill="#fff" stroke="#5a5a5a" stroke-width="0.7"/>
<rect x="811.32" y="337.49" width="7.20" height="7.20" fill="#fff" stroke="#5a5a5a" stroke-width="0.7"/>
<rect x="788.45" y="354.41" width="7.20" height="7.20" fill="#fff" stroke="#5a5a5a" stroke-width="0.7"/>
<rect x="811.32" y="354.41" width="7.20" height="7.20" fill="#fff" stroke="#5a5a5a" stroke-width="0.7"/>
<rect x="788.45" y="371.34" width="7.20" height="7.20" fill="#fff" stroke="#5a5a5a" stroke-width="0.7"/>
<rect x="811.32" y="371.34" width="7.20" height="7.20" fill="#fff" stroke="#5a5a5a" stroke-width="0.7"/>
<rect x="788.45" y="388.26" width="7.20" height="7.20" fill="#fff" stroke="#5a5a5a" stroke-width="0.7"/>
<rect x="811.32" y="388.26" width="7.20" height="7.20" fill="#fff" stroke="#5a5a5a" stroke-width="0.7"/>
<rect x="788.45" y="405.18" width="7.20" height="7.20" fill="#fff" stroke="#5a5a5a" stroke-width="0.7"/>
<rect x="811.32" y="405.18" width="7.20" height="7.20" fill="#fff" stroke="#5a5a5a" stroke-width="0.7"/>
<rect x="788.45" y="422.10" width="7.20" height="7.20" fill="#fff" stroke="#5a5a5a" stroke-width="0.7"/>
<rect x="811.32" y="422.10" width="7.20" height="7.20" fill="#fff" stroke="#5a5a5a" stroke-width="0.7"/>
<rect x="788.45" y="439.02" width="7.20" height="7.20" fill="#fff" stroke="#5a5a5a" stroke-width="0.7"/>
<rect x="811.32" y="439.02" width="7.20" height="7.20" fill="#fff" stroke="#5a5a5a" stroke-width="0.7"/>
<rect x="21.25" y="450.98" width="996.25" height="13.92" fill="#ababab" />
<rect x="21.25" y="464.90" width="996.25" height="9.40" fill="#f0f0f0" />
<rect x="231.25" y="465.60" width="776.60" height="8.60" fill="#cdcdcd" />
<path d="M27.2 467.6 L25.2 469.6 L27.2 471.6" fill="none" stroke="#444" stroke-width="1.2"/>
<path d="M1011.6 467.6 L1013.6 469.6 L1011.6 471.6" fill="none" stroke="#444" stroke-width="1.2"/>
<rect x="11.4" y="44.7" width="1006.6" height="429.8" fill="none" stroke="#5f5f5f" stroke-width="0.9"/>
<line x1="11.40" y1="44.90" x2="1018.00" y2="44.90" stroke="#7d7d7d" stroke-width="1.2" />
<rect x="7.50" y="481.90" width="1017.00" height="13.80" fill="url(#gc)" />
<rect x="0.90" y="495.70" width="1024.00" height="1.50" fill="#f6f6f6" />
<path d="M1014.5 489.8 L1015.8 488.5 L1017.1 489.8 M1014.5 488 L1015.8 486.7 L1017.1 488" fill="none" stroke="#39404f" stroke-width="1"/>
</svg>
<div class="t h" style="left:8.48px;top:47.70px;width:80.00px;height:10.20px;line-height:10.20px;">سعر</div>
<div class="t h" style="left:8.48px;top:58.30px;width:80.00px;height:10.20px;line-height:10.20px;">الجملة</div>
<div class="t h" style="left:56.48px;top:47.70px;width:80.00px;height:10.20px;line-height:10.20px;">سعر</div>
<div class="t h" style="left:56.48px;top:58.30px;width:80.00px;height:10.20px;line-height:10.20px;">الشراء</div>
<div class="t h" style="left:103.22px;top:47.70px;width:80.00px;height:10.20px;line-height:10.20px;">سعر</div>
<div class="t h" style="left:103.22px;top:58.30px;width:80.00px;height:10.20px;line-height:10.20px;">البيع</div>
<div class="t h" style="left:146.30px;top:47.70px;width:80.00px;height:10.20px;line-height:10.20px;">عدد</div>
<div class="t h" style="left:146.30px;top:58.30px;width:80.00px;height:10.20px;line-height:10.20px;">الايام</div>
<div class="t h" style="left:193.80px;top:47.70px;width:80.00px;height:10.20px;line-height:10.20px;">أخر شراء</div>
<div class="t h" style="left:241.97px;top:47.70px;width:80.00px;height:10.20px;line-height:10.20px;">الرصيد</div>
<div class="t h" style="left:284.15px;top:47.70px;width:80.00px;height:10.20px;line-height:10.20px;">تسوية</div>
<div class="t h" style="left:332.40px;top:47.70px;width:80.00px;height:10.20px;line-height:10.20px;">تحويلات</div>
<div class="t h" style="left:332.40px;top:58.30px;width:80.00px;height:10.20px;line-height:10.20px;">صادرة</div>
<div class="t h" style="left:387.32px;top:47.70px;width:80.00px;height:10.20px;line-height:10.20px;">تحويلات</div>
<div class="t h" style="left:387.32px;top:58.30px;width:80.00px;height:10.20px;line-height:10.20px;">واردة</div>
<div class="t h" style="left:436.07px;top:47.70px;width:80.00px;height:10.20px;line-height:10.20px;">م</div>
<div class="t h" style="left:436.07px;top:58.30px;width:80.00px;height:10.20px;line-height:10.20px;">مبيعات</div>
<div class="t h" style="left:477.52px;top:47.70px;width:80.00px;height:10.20px;line-height:10.20px;">مبيعات</div>
<div class="t h" style="left:514.08px;top:47.70px;width:80.00px;height:10.20px;line-height:10.20px;">م مبيعات</div>
<div class="t h" style="left:514.08px;top:58.30px;width:80.00px;height:10.20px;line-height:10.20px;">جملة</div>
<div class="t h" style="left:566.52px;top:47.70px;width:80.00px;height:10.20px;line-height:10.20px;">مبيعات</div>
<div class="t h" style="left:566.52px;top:58.30px;width:80.00px;height:10.20px;line-height:10.20px;">جملة</div>
<div class="t h" style="left:616.65px;top:47.70px;width:80.00px;height:10.20px;line-height:10.20px;">انتاج تام</div>
<div class="t h" style="left:671.40px;top:47.70px;width:80.00px;height:10.20px;line-height:10.20px;">مرتجع</div>
<div class="t h" style="left:671.40px;top:58.30px;width:80.00px;height:10.20px;line-height:10.20px;">مشتريات</div>
<div class="t h" style="left:724.27px;top:47.70px;width:80.00px;height:10.20px;line-height:10.20px;">مشتريات</div>
<div class="t h" style="left:751.05px;top:47.70px;width:80.00px;height:10.20px;line-height:10.20px;">تكرار</div>
<div class="t h" style="left:773.62px;top:47.70px;width:80.00px;height:10.20px;line-height:10.20px;">أختيار</div>
<div class="t h" style="left:858.77px;top:47.70px;width:80.00px;height:10.20px;line-height:10.20px;">اسم الصنف</div>
<div class="t h" style="left:933.58px;top:47.70px;width:80.00px;height:10.20px;line-height:10.20px;">الموديل</div>
<div class="t h" style="left:962.05px;top:47.70px;width:80.00px;height:10.20px;line-height:10.20px;">المختصر</div>
<div class="t d r" style="left:11.25px;top:80.30px;width:52.65px;height:16.92px;line-height:16.92px;">125</div>
<div class="t d r" style="left:57.90px;top:80.30px;width:55.35px;height:16.92px;line-height:16.92px;">90</div>
<div class="t d r" style="left:107.25px;top:80.30px;width:50.15px;height:16.92px;line-height:16.92px;">117</div>
<div class="t d r" style="left:151.40px;top:80.30px;width:48.00px;height:16.92px;line-height:16.92px;">1964</div>
<div class="t d r" style="left:193.40px;top:80.30px;width:59.00px;height:16.92px;line-height:16.92px;">28/09/2020</div>
<div class="t d r" style="left:246.40px;top:80.30px;width:49.35px;height:16.92px;line-height:16.92px;">21.00</div>
<div class="t d r" style="left:289.75px;top:80.30px;width:47.00px;height:16.92px;line-height:16.92px;">0.00</div>
<div class="t d c" style="left:340.75px;top:80.30px;width:55.50px;height:16.92px;line-height:16.92px;">0.00</div>
<div class="t d c" style="left:396.25px;top:80.30px;width:54.35px;height:16.92px;line-height:16.92px;">0.00</div>
<div class="t d c" style="left:450.60px;top:80.30px;width:43.15px;height:16.92px;line-height:16.92px;">0.00</div>
<div class="t d c" style="left:493.75px;top:80.30px;width:39.75px;height:16.92px;line-height:16.92px;">1.00</div>
<div class="t d c" style="left:533.50px;top:80.30px;width:43.75px;height:16.92px;line-height:16.92px;">0.00</div>
<div class="t d c" style="left:577.25px;top:80.30px;width:50.75px;height:16.92px;line-height:16.92px;">0.00</div>
<div class="t d c" style="left:628.00px;top:80.30px;width:49.50px;height:16.92px;line-height:16.92px;">0.00</div>
<div class="t d c" style="left:677.50px;top:80.30px;width:60.00px;height:16.92px;line-height:16.92px;">0.00</div>
<div class="t d c" style="left:737.50px;top:80.30px;width:45.75px;height:16.92px;line-height:16.92px;">22.00</div>
<div class="t d r" style="left:819.00px;top:80.30px;width:137.75px;height:16.92px;line-height:16.92px;">ffffff</div>
<div class="t d r" style="left:950.75px;top:80.30px;width:34.25px;height:16.92px;line-height:16.92px;">666</div>
<div class="t d c" style="left:989.00px;top:80.30px;width:28.50px;height:16.92px;line-height:16.92px;">21</div>
<div class="t d r" style="left:11.25px;top:97.22px;width:52.65px;height:16.92px;line-height:16.92px;">125</div>
<div class="t d r" style="left:57.90px;top:97.22px;width:55.35px;height:16.92px;line-height:16.92px;">120</div>
<div class="t d r" style="left:107.25px;top:97.22px;width:50.15px;height:16.92px;line-height:16.92px;">150</div>
<div class="t d r" style="left:246.40px;top:97.22px;width:49.35px;height:16.92px;line-height:16.92px;">20.00</div>
<div class="t d r" style="left:289.75px;top:97.22px;width:47.00px;height:16.92px;line-height:16.92px;">0.00</div>
<div class="t d c" style="left:340.75px;top:97.22px;width:55.50px;height:16.92px;line-height:16.92px;">0.00</div>
<div class="t d c" style="left:396.25px;top:97.22px;width:54.35px;height:16.92px;line-height:16.92px;">0.00</div>
<div class="t d c" style="left:450.60px;top:97.22px;width:43.15px;height:16.92px;line-height:16.92px;">0.00</div>
<div class="t d c" style="left:493.75px;top:97.22px;width:39.75px;height:16.92px;line-height:16.92px;">0.00</div>
<div class="t d c" style="left:533.50px;top:97.22px;width:43.75px;height:16.92px;line-height:16.92px;">0.00</div>
<div class="t d c" style="left:577.25px;top:97.22px;width:50.75px;height:16.92px;line-height:16.92px;">0.00</div>
<div class="t d c" style="left:628.00px;top:97.22px;width:49.50px;height:16.92px;line-height:16.92px;">20.00</div>
<div class="t d c" style="left:677.50px;top:97.22px;width:60.00px;height:16.92px;line-height:16.92px;">0.00</div>
<div class="t d c" style="left:737.50px;top:97.22px;width:45.75px;height:16.92px;line-height:16.92px;">0.00</div>
<div class="t d r" style="left:819.00px;top:97.22px;width:137.75px;height:16.92px;line-height:16.92px;">hbhbh</div>
<div class="t d r" style="left:950.75px;top:97.22px;width:34.25px;height:16.92px;line-height:16.92px;">1</div>
<div class="t d c" style="left:989.00px;top:97.22px;width:28.50px;height:16.92px;line-height:16.92px;">35</div>
<div class="t d r" style="left:11.25px;top:114.14px;width:52.65px;height:16.92px;line-height:16.92px;">115</div>
<div class="t d r" style="left:57.90px;top:114.14px;width:55.35px;height:16.92px;line-height:16.92px;">90</div>
<div class="t d r" style="left:107.25px;top:114.14px;width:50.15px;height:16.92px;line-height:16.92px;">117</div>
<div class="t d r" style="left:151.40px;top:114.14px;width:48.00px;height:16.92px;line-height:16.92px;">1964</div>
<div class="t d r" style="left:193.40px;top:114.14px;width:59.00px;height:16.92px;line-height:16.92px;">28/09/2020</div>
<div class="t d r" style="left:246.40px;top:114.14px;width:49.35px;height:16.92px;line-height:16.92px;">9.00</div>
<div class="t d r" style="left:289.75px;top:114.14px;width:47.00px;height:16.92px;line-height:16.92px;">0.00</div>
<div class="t d c" style="left:340.75px;top:114.14px;width:55.50px;height:16.92px;line-height:16.92px;">0.00</div>
<div class="t d c" style="left:396.25px;top:114.14px;width:54.35px;height:16.92px;line-height:16.92px;">0.00</div>
<div class="t d c" style="left:450.60px;top:114.14px;width:43.15px;height:16.92px;line-height:16.92px;">0.00</div>
<div class="t d c" style="left:493.75px;top:114.14px;width:39.75px;height:16.92px;line-height:16.92px;">1.00</div>
<div class="t d c" style="left:533.50px;top:114.14px;width:43.75px;height:16.92px;line-height:16.92px;">0.00</div>
<div class="t d c" style="left:577.25px;top:114.14px;width:50.75px;height:16.92px;line-height:16.92px;">0.00</div>
<div class="t d c" style="left:628.00px;top:114.14px;width:49.50px;height:16.92px;line-height:16.92px;">8.00</div>
<div class="t d c" style="left:677.50px;top:114.14px;width:60.00px;height:16.92px;line-height:16.92px;">0.00</div>
<div class="t d c" style="left:737.50px;top:114.14px;width:45.75px;height:16.92px;line-height:16.92px;">2.00</div>
<div class="t d r" style="left:819.00px;top:114.14px;width:137.75px;height:16.92px;line-height:16.92px;">kjkjk</div>
<div class="t d r" style="left:950.75px;top:114.14px;width:34.25px;height:16.92px;line-height:16.92px;">23</div>
<div class="t d c" style="left:989.00px;top:114.14px;width:28.50px;height:16.92px;line-height:16.92px;">26</div>
<div class="t d r" style="left:11.25px;top:131.07px;width:52.65px;height:16.92px;line-height:16.92px;">62</div>
<div class="t d r" style="left:57.90px;top:131.07px;width:55.35px;height:16.92px;line-height:16.92px;">90</div>
<div class="t d r" style="left:107.25px;top:131.07px;width:50.15px;height:16.92px;line-height:16.92px;">117</div>
<div class="t d r" style="left:151.40px;top:131.07px;width:48.00px;height:16.92px;line-height:16.92px;">1964</div>
<div class="t d r" style="left:193.40px;top:131.07px;width:59.00px;height:16.92px;line-height:16.92px;">28/09/2020</div>
<div class="t d r" style="left:246.40px;top:131.07px;width:49.35px;height:16.92px;line-height:16.92px;">41.00</div>
<div class="t d r" style="left:289.75px;top:131.07px;width:47.00px;height:16.92px;line-height:16.92px;">0.00</div>
<div class="t d c" style="left:340.75px;top:131.07px;width:55.50px;height:16.92px;line-height:16.92px;">0.00</div>
<div class="t d c" style="left:396.25px;top:131.07px;width:54.35px;height:16.92px;line-height:16.92px;">0.00</div>
<div class="t d c" style="left:450.60px;top:131.07px;width:43.15px;height:16.92px;line-height:16.92px;">0.00</div>
<div class="t d c" style="left:493.75px;top:131.07px;width:39.75px;height:16.92px;line-height:16.92px;">8.00</div>
<div class="t d c" style="left:533.50px;top:131.07px;width:43.75px;height:16.92px;line-height:16.92px;">0.00</div>
<div class="t d c" style="left:577.25px;top:131.07px;width:50.75px;height:16.92px;line-height:16.92px;">0.00</div>
<div class="t d c" style="left:628.00px;top:131.07px;width:49.50px;height:16.92px;line-height:16.92px;">0.00</div>
<div class="t d c" style="left:677.50px;top:131.07px;width:60.00px;height:16.92px;line-height:16.92px;">0.00</div>
<div class="t d c" style="left:737.50px;top:131.07px;width:45.75px;height:16.92px;line-height:16.92px;">49.00</div>
<div class="t d r" style="left:819.00px;top:131.07px;width:137.75px;height:16.92px;line-height:16.92px;">lfklklgdgdg</div>
<div class="t d r" style="left:950.75px;top:131.07px;width:34.25px;height:16.92px;line-height:16.92px;">1</div>
<div class="t d c" style="left:989.00px;top:131.07px;width:28.50px;height:16.92px;line-height:16.92px;">20</div>
<div class="t d r" style="left:11.25px;top:147.99px;width:52.65px;height:16.92px;line-height:16.92px;">130</div>
<div class="t d r" style="left:57.90px;top:147.99px;width:55.35px;height:16.92px;line-height:16.92px;">54</div>
<div class="t d r" style="left:107.25px;top:147.99px;width:50.15px;height:16.92px;line-height:16.92px;">70</div>
<div class="t d r" style="left:246.40px;top:147.99px;width:49.35px;height:16.92px;line-height:16.92px;">7.00</div>
<div class="t d r" style="left:289.75px;top:147.99px;width:47.00px;height:16.92px;line-height:16.92px;">0.00</div>
<div class="t d c" style="left:340.75px;top:147.99px;width:55.50px;height:16.92px;line-height:16.92px;">0.00</div>
<div class="t d c" style="left:396.25px;top:147.99px;width:54.35px;height:16.92px;line-height:16.92px;">0.00</div>
<div class="t d c" style="left:450.60px;top:147.99px;width:43.15px;height:16.92px;line-height:16.92px;">0.00</div>
<div class="t d c" style="left:493.75px;top:147.99px;width:39.75px;height:16.92px;line-height:16.92px;">5.00</div>
<div class="t d c" style="left:533.50px;top:147.99px;width:43.75px;height:16.92px;line-height:16.92px;">0.00</div>
<div class="t d c" style="left:577.25px;top:147.99px;width:50.75px;height:16.92px;line-height:16.92px;">0.00</div>
<div class="t d c" style="left:628.00px;top:147.99px;width:49.50px;height:16.92px;line-height:16.92px;">12.00</div>
<div class="t d c" style="left:677.50px;top:147.99px;width:60.00px;height:16.92px;line-height:16.92px;">0.00</div>
<div class="t d c" style="left:737.50px;top:147.99px;width:45.75px;height:16.92px;line-height:16.92px;">0.00</div>
<div class="t d r" style="left:819.00px;top:147.99px;width:137.75px;height:16.92px;line-height:16.92px;">olkokoo</div>
<div class="t d r" style="left:950.75px;top:147.99px;width:34.25px;height:16.92px;line-height:16.92px;">225</div>
<div class="t d c" style="left:989.00px;top:147.99px;width:28.50px;height:16.92px;line-height:16.92px;">23</div>
<div class="t d r" style="left:11.25px;top:164.91px;width:52.65px;height:16.92px;line-height:16.92px;">31</div>
<div class="t d r" style="left:57.90px;top:164.91px;width:55.35px;height:16.92px;line-height:16.92px;">23</div>
<div class="t d r" style="left:107.25px;top:164.91px;width:50.15px;height:16.92px;line-height:16.92px;">38</div>
<div class="t d r" style="left:151.40px;top:164.91px;width:48.00px;height:16.92px;line-height:16.92px;">3267</div>
<div class="t d r" style="left:193.40px;top:164.91px;width:59.00px;height:16.92px;line-height:16.92px;">05/03/2017</div>
<div class="t d r" style="left:246.40px;top:164.91px;width:49.35px;height:16.92px;line-height:16.92px;">2.00</div>
<div class="t d r" style="left:289.75px;top:164.91px;width:47.00px;height:16.92px;line-height:16.92px;">0.00</div>
<div class="t d c" style="left:340.75px;top:164.91px;width:55.50px;height:16.92px;line-height:16.92px;">0.00</div>
<div class="t d c" style="left:396.25px;top:164.91px;width:54.35px;height:16.92px;line-height:16.92px;">0.00</div>
<div class="t d c" style="left:450.60px;top:164.91px;width:43.15px;height:16.92px;line-height:16.92px;">0.00</div>
<div class="t d c" style="left:493.75px;top:164.91px;width:39.75px;height:16.92px;line-height:16.92px;">0.00</div>
<div class="t d c" style="left:533.50px;top:164.91px;width:43.75px;height:16.92px;line-height:16.92px;">0.00</div>
<div class="t d c" style="left:577.25px;top:164.91px;width:50.75px;height:16.92px;line-height:16.92px;">0.00</div>
<div class="t d c" style="left:628.00px;top:164.91px;width:49.50px;height:16.92px;line-height:16.92px;">0.00</div>
<div class="t d c" style="left:677.50px;top:164.91px;width:60.00px;height:16.92px;line-height:16.92px;">0.00</div>
<div class="t d c" style="left:737.50px;top:164.91px;width:45.75px;height:16.92px;line-height:16.92px;">2.00</div>
<div class="t d r" style="left:819.00px;top:164.91px;width:137.75px;height:16.92px;line-height:16.92px;">sdsdsds</div>
<div class="t d r" style="left:950.75px;top:164.91px;width:34.25px;height:16.92px;line-height:16.92px;">702</div>
<div class="t d c" style="left:989.00px;top:164.91px;width:28.50px;height:16.92px;line-height:16.92px;">45</div>
<div class="t d r" style="left:11.25px;top:181.83px;width:52.65px;height:16.92px;line-height:16.92px;">125</div>
<div class="t d r" style="left:57.90px;top:181.83px;width:55.35px;height:16.92px;line-height:16.92px;">90</div>
<div class="t d r" style="left:107.25px;top:181.83px;width:50.15px;height:16.92px;line-height:16.92px;">117</div>
<div class="t d r" style="left:151.40px;top:181.83px;width:48.00px;height:16.92px;line-height:16.92px;">3494</div>
<div class="t d r" style="left:193.40px;top:181.83px;width:59.00px;height:16.92px;line-height:16.92px;">21/07/2016</div>
<div class="t d r" style="left:246.40px;top:181.83px;width:49.35px;height:16.92px;line-height:16.92px;">27.00</div>
<div class="t d r" style="left:289.75px;top:181.83px;width:47.00px;height:16.92px;line-height:16.92px;">0.00</div>
<div class="t d c" style="left:340.75px;top:181.83px;width:55.50px;height:16.92px;line-height:16.92px;">0.00</div>
<div class="t d c" style="left:396.25px;top:181.83px;width:54.35px;height:16.92px;line-height:16.92px;">0.00</div>
<div class="t d c" style="left:450.60px;top:181.83px;width:43.15px;height:16.92px;line-height:16.92px;">0.00</div>
<div class="t d c" style="left:493.75px;top:181.83px;width:39.75px;height:16.92px;line-height:16.92px;">3.00</div>
<div class="t d c" style="left:533.50px;top:181.83px;width:43.75px;height:16.92px;line-height:16.92px;">0.00</div>
<div class="t d c" style="left:577.25px;top:181.83px;width:50.75px;height:16.92px;line-height:16.92px;">0.00</div>
<div class="t d c" style="left:628.00px;top:181.83px;width:49.50px;height:16.92px;line-height:16.92px;">0.00</div>
<div class="t d c" style="left:677.50px;top:181.83px;width:60.00px;height:16.92px;line-height:16.92px;">0.00</div>
<div class="t d c" style="left:737.50px;top:181.83px;width:45.75px;height:16.92px;line-height:16.92px;">30.00</div>
<div class="t d r" style="left:819.00px;top:181.83px;width:137.75px;height:16.92px;line-height:16.92px;">test oka</div>
<div class="t d r" style="left:950.75px;top:181.83px;width:34.25px;height:16.92px;line-height:16.92px;">95955</div>
<div class="t d c" style="left:989.00px;top:181.83px;width:28.50px;height:16.92px;line-height:16.92px;">30</div>
<div class="t d r" style="left:11.25px;top:198.75px;width:52.65px;height:16.92px;line-height:16.92px;">125</div>
<div class="t d r" style="left:57.90px;top:198.75px;width:55.35px;height:16.92px;line-height:16.92px;">100</div>
<div class="t d r" style="left:107.25px;top:198.75px;width:50.15px;height:16.92px;line-height:16.92px;">130</div>
<div class="t d r" style="left:246.40px;top:198.75px;width:49.35px;height:16.92px;line-height:16.92px;">2.00-</div>
<div class="t d r" style="left:289.75px;top:198.75px;width:47.00px;height:16.92px;line-height:16.92px;">0.00</div>
<div class="t d c" style="left:340.75px;top:198.75px;width:55.50px;height:16.92px;line-height:16.92px;">0.00</div>
<div class="t d c" style="left:396.25px;top:198.75px;width:54.35px;height:16.92px;line-height:16.92px;">0.00</div>
<div class="t d c" style="left:450.60px;top:198.75px;width:43.15px;height:16.92px;line-height:16.92px;">0.00</div>
<div class="t d c" style="left:493.75px;top:198.75px;width:39.75px;height:16.92px;line-height:16.92px;">2.00</div>
<div class="t d c" style="left:533.50px;top:198.75px;width:43.75px;height:16.92px;line-height:16.92px;">0.00</div>
<div class="t d c" style="left:577.25px;top:198.75px;width:50.75px;height:16.92px;line-height:16.92px;">0.00</div>
<div class="t d c" style="left:628.00px;top:198.75px;width:49.50px;height:16.92px;line-height:16.92px;">0.00</div>
<div class="t d c" style="left:677.50px;top:198.75px;width:60.00px;height:16.92px;line-height:16.92px;">0.00</div>
<div class="t d c" style="left:737.50px;top:198.75px;width:45.75px;height:16.92px;line-height:16.92px;">0.00</div>
<div class="t d r" style="left:819.00px;top:198.75px;width:137.75px;height:16.92px;line-height:16.92px;">testtttttttt</div>
<div class="t d r" style="left:950.75px;top:198.75px;width:34.25px;height:16.92px;line-height:16.92px;">99</div>
<div class="t d c" style="left:989.00px;top:198.75px;width:28.50px;height:16.92px;line-height:16.92px;">49</div>
<div class="t d r" style="left:11.25px;top:215.68px;width:52.65px;height:16.92px;line-height:16.92px;">116</div>
<div class="t d r" style="left:57.90px;top:215.68px;width:55.35px;height:16.92px;line-height:16.92px;">100</div>
<div class="t d r" style="left:107.25px;top:215.68px;width:50.15px;height:16.92px;line-height:16.92px;">110</div>
<div class="t d r" style="left:151.40px;top:215.68px;width:48.00px;height:16.92px;line-height:16.92px;">2464</div>
<div class="t d r" style="left:193.40px;top:215.68px;width:59.00px;height:16.92px;line-height:16.92px;">17/05/2019</div>
<div class="t d r" style="left:246.40px;top:215.68px;width:49.35px;height:16.92px;line-height:16.92px;">20.00</div>
<div class="t d r" style="left:289.75px;top:215.68px;width:47.00px;height:16.92px;line-height:16.92px;">0.00</div>
<div class="t d c" style="left:340.75px;top:215.68px;width:55.50px;height:16.92px;line-height:16.92px;">0.00</div>
<div class="t d c" style="left:396.25px;top:215.68px;width:54.35px;height:16.92px;line-height:16.92px;">0.00</div>
<div class="t d c" style="left:450.60px;top:215.68px;width:43.15px;height:16.92px;line-height:16.92px;">0.00</div>
<div class="t d c" style="left:493.75px;top:215.68px;width:39.75px;height:16.92px;line-height:16.92px;">0.00</div>
<div class="t d c" style="left:533.50px;top:215.68px;width:43.75px;height:16.92px;line-height:16.92px;">0.00</div>
<div class="t d c" style="left:577.25px;top:215.68px;width:50.75px;height:16.92px;line-height:16.92px;">0.00</div>
<div class="t d c" style="left:628.00px;top:215.68px;width:49.50px;height:16.92px;line-height:16.92px;">0.00</div>
<div class="t d c" style="left:677.50px;top:215.68px;width:60.00px;height:16.92px;line-height:16.92px;">0.00</div>
<div class="t d c" style="left:737.50px;top:215.68px;width:45.75px;height:16.92px;line-height:16.92px;">20.00</div>
<div class="t d r" style="left:819.00px;top:215.68px;width:137.75px;height:16.92px;line-height:16.92px;">tggggggggg</div>
<div class="t d r" style="left:950.75px;top:215.68px;width:34.25px;height:16.92px;line-height:16.92px;">1</div>
<div class="t d c" style="left:989.00px;top:215.68px;width:28.50px;height:16.92px;line-height:16.92px;">106</div>
<div class="t d r" style="left:11.25px;top:232.60px;width:52.65px;height:16.92px;line-height:16.92px;">120</div>
<div class="t d r" style="left:57.90px;top:232.60px;width:55.35px;height:16.92px;line-height:16.92px;">100</div>
<div class="t d r" style="left:107.25px;top:232.60px;width:50.15px;height:16.92px;line-height:16.92px;">120</div>
<div class="t d r" style="left:151.40px;top:232.60px;width:48.00px;height:16.92px;line-height:16.92px;">626</div>
<div class="t d r" style="left:193.40px;top:232.60px;width:59.00px;height:16.92px;line-height:16.92px;">28/05/2024</div>
<div class="t d r" style="left:246.40px;top:232.60px;width:49.35px;height:16.92px;line-height:16.92px;">12.00</div>
<div class="t d r" style="left:289.75px;top:232.60px;width:47.00px;height:16.92px;line-height:16.92px;">0.00</div>
<div class="t d c" style="left:340.75px;top:232.60px;width:55.50px;height:16.92px;line-height:16.92px;">0.00</div>
<div class="t d c" style="left:396.25px;top:232.60px;width:54.35px;height:16.92px;line-height:16.92px;">0.00</div>
<div class="t d c" style="left:450.60px;top:232.60px;width:43.15px;height:16.92px;line-height:16.92px;">0.00</div>
<div class="t d c" style="left:493.75px;top:232.60px;width:39.75px;height:16.92px;line-height:16.92px;">6.00</div>
<div class="t d c" style="left:533.50px;top:232.60px;width:43.75px;height:16.92px;line-height:16.92px;">0.00</div>
<div class="t d c" style="left:577.25px;top:232.60px;width:50.75px;height:16.92px;line-height:16.92px;">0.00</div>
<div class="t d c" style="left:628.00px;top:232.60px;width:49.50px;height:16.92px;line-height:16.92px;">0.00</div>
<div class="t d c" style="left:677.50px;top:232.60px;width:60.00px;height:16.92px;line-height:16.92px;">0.00</div>
<div class="t d c" style="left:737.50px;top:232.60px;width:45.75px;height:16.92px;line-height:16.92px;">18.00</div>
<div class="t d r a" style="left:819.00px;top:232.10px;width:137.75px;height:16.92px;line-height:16.92px;">بنطلون - 15556</div>
<div class="t d r" style="left:950.75px;top:232.60px;width:34.25px;height:16.92px;line-height:16.92px;">15556</div>
<div class="t d c" style="left:989.00px;top:232.60px;width:28.50px;height:16.92px;line-height:16.92px;">1110</div>
<div class="t d r" style="left:11.25px;top:249.52px;width:52.65px;height:16.92px;line-height:16.92px;">120</div>
<div class="t d r" style="left:57.90px;top:249.52px;width:55.35px;height:16.92px;line-height:16.92px;">100</div>
<div class="t d r" style="left:107.25px;top:249.52px;width:50.15px;height:16.92px;line-height:16.92px;">120</div>
<div class="t d r" style="left:151.40px;top:249.52px;width:48.00px;height:16.92px;line-height:16.92px;">2903</div>
<div class="t d r" style="left:193.40px;top:249.52px;width:59.00px;height:16.92px;line-height:16.92px;">04/03/2018</div>
<div class="t d r" style="left:246.40px;top:249.52px;width:49.35px;height:16.92px;line-height:16.92px;">9.00</div>
<div class="t d r" style="left:289.75px;top:249.52px;width:47.00px;height:16.92px;line-height:16.92px;">0.00</div>
<div class="t d c" style="left:340.75px;top:249.52px;width:55.50px;height:16.92px;line-height:16.92px;">0.00</div>
<div class="t d c" style="left:396.25px;top:249.52px;width:54.35px;height:16.92px;line-height:16.92px;">0.00</div>
<div class="t d c" style="left:450.60px;top:249.52px;width:43.15px;height:16.92px;line-height:16.92px;">0.00</div>
<div class="t d c" style="left:493.75px;top:249.52px;width:39.75px;height:16.92px;line-height:16.92px;">0.00</div>
<div class="t d c" style="left:533.50px;top:249.52px;width:43.75px;height:16.92px;line-height:16.92px;">0.00</div>
<div class="t d c" style="left:577.25px;top:249.52px;width:50.75px;height:16.92px;line-height:16.92px;">0.00</div>
<div class="t d c" style="left:628.00px;top:249.52px;width:49.50px;height:16.92px;line-height:16.92px;">0.00</div>
<div class="t d c" style="left:677.50px;top:249.52px;width:60.00px;height:16.92px;line-height:16.92px;">0.00</div>
<div class="t d c" style="left:737.50px;top:249.52px;width:45.75px;height:16.92px;line-height:16.92px;">9.00</div>
<div class="t d r a" style="left:819.00px;top:249.02px;width:137.75px;height:16.92px;line-height:16.92px;">بنطلون - 15557</div>
<div class="t d r" style="left:950.75px;top:249.52px;width:34.25px;height:16.92px;line-height:16.92px;">15557</div>
<div class="t d c" style="left:989.00px;top:249.52px;width:28.50px;height:16.92px;line-height:16.92px;">1017</div>
<div class="t d r" style="left:11.25px;top:266.44px;width:52.65px;height:16.92px;line-height:16.92px;">130</div>
<div class="t d r" style="left:57.90px;top:266.44px;width:55.35px;height:16.92px;line-height:16.92px;">90</div>
<div class="t d r" style="left:107.25px;top:266.44px;width:50.15px;height:16.92px;line-height:16.92px;">149</div>
<div class="t d r" style="left:151.40px;top:266.44px;width:48.00px;height:16.92px;line-height:16.92px;">3481</div>
<div class="t d r" style="left:193.40px;top:266.44px;width:59.00px;height:16.92px;line-height:16.92px;">03/08/2016</div>
<div class="t d r" style="left:246.40px;top:266.44px;width:49.35px;height:16.92px;line-height:16.92px;">95.00</div>
<div class="t d r" style="left:289.75px;top:266.44px;width:47.00px;height:16.92px;line-height:16.92px;">0.00</div>
<div class="t d c" style="left:340.75px;top:266.44px;width:55.50px;height:16.92px;line-height:16.92px;">49.00</div>
<div class="t d c" style="left:396.25px;top:266.44px;width:54.35px;height:16.92px;line-height:16.92px;">31.00</div>
<div class="t d c" style="left:450.60px;top:266.44px;width:43.15px;height:16.92px;line-height:16.92px;">1.00</div>
<div class="t d c" style="left:493.75px;top:266.44px;width:39.75px;height:16.92px;line-height:16.92px;">8.00</div>
<div class="t d c" style="left:533.50px;top:266.44px;width:43.75px;height:16.92px;line-height:16.92px;">0.00</div>
<div class="t d c" style="left:577.25px;top:266.44px;width:50.75px;height:16.92px;line-height:16.92px;">0.00</div>
<div class="t d c" style="left:628.00px;top:266.44px;width:49.50px;height:16.92px;line-height:16.92px;">40.00</div>
<div class="t d c" style="left:677.50px;top:266.44px;width:60.00px;height:16.92px;line-height:16.92px;">0.00</div>
<div class="t d c" style="left:737.50px;top:266.44px;width:45.75px;height:16.92px;line-height:16.92px;">80.00</div>
<div class="t d r a" style="left:819.00px;top:265.94px;width:137.75px;height:16.92px;line-height:16.92px;">بيجامة</div>
<div class="t d r" style="left:950.75px;top:266.44px;width:34.25px;height:16.92px;line-height:16.92px;">255</div>
<div class="t d c" style="left:989.00px;top:266.44px;width:28.50px;height:16.92px;line-height:16.92px;">25</div>
<div class="t d r" style="left:11.25px;top:283.36px;width:52.65px;height:16.92px;line-height:16.92px;">125</div>
<div class="t d r" style="left:57.90px;top:283.36px;width:55.35px;height:16.92px;line-height:16.92px;">90</div>
<div class="t d r" style="left:107.25px;top:283.36px;width:50.15px;height:16.92px;line-height:16.92px;">117</div>
<div class="t d r" style="left:151.40px;top:283.36px;width:48.00px;height:16.92px;line-height:16.92px;">3516</div>
<div class="t d r" style="left:193.40px;top:283.36px;width:59.00px;height:16.92px;line-height:16.92px;">29/06/2016</div>
<div class="t d r" style="left:246.40px;top:283.36px;width:49.35px;height:16.92px;line-height:16.92px;">21.00</div>
<div class="t d r" style="left:289.75px;top:283.36px;width:47.00px;height:16.92px;line-height:16.92px;">0.00</div>
<div class="t d c" style="left:340.75px;top:283.36px;width:55.50px;height:16.92px;line-height:16.92px;">0.00</div>
<div class="t d c" style="left:396.25px;top:283.36px;width:54.35px;height:16.92px;line-height:16.92px;">0.00</div>
<div class="t d c" style="left:450.60px;top:283.36px;width:43.15px;height:16.92px;line-height:16.92px;">1.00</div>
<div class="t d c" style="left:493.75px;top:283.36px;width:39.75px;height:16.92px;line-height:16.92px;">2.00</div>
<div class="t d c" style="left:533.50px;top:283.36px;width:43.75px;height:16.92px;line-height:16.92px;">0.00</div>
<div class="t d c" style="left:577.25px;top:283.36px;width:50.75px;height:16.92px;line-height:16.92px;">0.00</div>
<div class="t d c" style="left:628.00px;top:283.36px;width:49.50px;height:16.92px;line-height:16.92px;">0.00</div>
<div class="t d c" style="left:677.50px;top:283.36px;width:60.00px;height:16.92px;line-height:16.92px;">0.00</div>
<div class="t d c" style="left:737.50px;top:283.36px;width:45.75px;height:16.92px;line-height:16.92px;">22.00</div>
<div class="t d r a" style="left:819.00px;top:282.86px;width:137.75px;height:16.92px;line-height:16.92px;">بيجامة كستور 3 كوم موديل 1973</div>
<div class="t d r" style="left:950.75px;top:283.36px;width:34.25px;height:16.92px;line-height:16.92px;">20</div>
<div class="t d c" style="left:989.00px;top:283.36px;width:28.50px;height:16.92px;line-height:16.92px;">28</div>
<div class="t d r" style="left:11.25px;top:300.29px;width:52.65px;height:16.92px;line-height:16.92px;">125</div>
<div class="t d r" style="left:57.90px;top:300.29px;width:55.35px;height:16.92px;line-height:16.92px;">90</div>
<div class="t d r" style="left:107.25px;top:300.29px;width:50.15px;height:16.92px;line-height:16.92px;">117</div>
<div class="t d r" style="left:151.40px;top:300.29px;width:48.00px;height:16.92px;line-height:16.92px;">2229</div>
<div class="t d r" style="left:193.40px;top:300.29px;width:59.00px;height:16.92px;line-height:16.92px;">07/01/2020</div>
<div class="t d r" style="left:246.40px;top:300.29px;width:49.35px;height:16.92px;line-height:16.92px;">2,000.00</div>
<div class="t d r" style="left:289.75px;top:300.29px;width:47.00px;height:16.92px;line-height:16.92px;">0.00</div>
<div class="t d c" style="left:340.75px;top:300.29px;width:55.50px;height:16.92px;line-height:16.92px;">0.00</div>
<div class="t d c" style="left:396.25px;top:300.29px;width:54.35px;height:16.92px;line-height:16.92px;">0.00</div>
<div class="t d c" style="left:450.60px;top:300.29px;width:43.15px;height:16.92px;line-height:16.92px;">0.00</div>
<div class="t d c" style="left:493.75px;top:300.29px;width:39.75px;height:16.92px;line-height:16.92px;">0.00</div>
<div class="t d c" style="left:533.50px;top:300.29px;width:43.75px;height:16.92px;line-height:16.92px;">0.00</div>
<div class="t d c" style="left:577.25px;top:300.29px;width:50.75px;height:16.92px;line-height:16.92px;">0.00</div>
<div class="t d c" style="left:628.00px;top:300.29px;width:49.50px;height:16.92px;line-height:16.92px;">2,000.00</div>
<div class="t d c" style="left:677.50px;top:300.29px;width:60.00px;height:16.92px;line-height:16.92px;">0.00</div>
<div class="t d c" style="left:737.50px;top:300.29px;width:45.75px;height:16.92px;line-height:16.92px;">0.00</div>
<div class="t d r a" style="left:819.00px;top:299.79px;width:137.75px;height:16.92px;line-height:16.92px;">تيشرت جديد اوى</div>
<div class="t d r" style="left:950.75px;top:300.29px;width:34.25px;height:16.92px;line-height:16.92px;">333</div>
<div class="t d c" style="left:989.00px;top:300.29px;width:28.50px;height:16.92px;line-height:16.92px;">5</div>
<div class="t d r" style="left:11.25px;top:317.21px;width:52.65px;height:16.92px;line-height:16.92px;">125</div>
<div class="t d r" style="left:57.90px;top:317.21px;width:55.35px;height:16.92px;line-height:16.92px;">1200</div>
<div class="t d r" style="left:107.25px;top:317.21px;width:50.15px;height:16.92px;line-height:16.92px;">117</div>
<div class="t d r" style="left:151.40px;top:317.21px;width:48.00px;height:16.92px;line-height:16.92px;">0</div>
<div class="t d r" style="left:193.40px;top:317.21px;width:59.00px;height:16.92px;line-height:16.92px;">13/02/2026</div>
<div class="t d r" style="left:246.40px;top:317.21px;width:49.35px;height:16.92px;line-height:16.92px;">16.00</div>
<div class="t d r" style="left:289.75px;top:317.21px;width:47.00px;height:16.92px;line-height:16.92px;">0.00</div>
<div class="t d c" style="left:340.75px;top:317.21px;width:55.50px;height:16.92px;line-height:16.92px;">0.00</div>
<div class="t d c" style="left:396.25px;top:317.21px;width:54.35px;height:16.92px;line-height:16.92px;">0.00</div>
<div class="t d c" style="left:450.60px;top:317.21px;width:43.15px;height:16.92px;line-height:16.92px;">0.00</div>
<div class="t d c" style="left:493.75px;top:317.21px;width:39.75px;height:16.92px;line-height:16.92px;">23.00</div>
<div class="t d c" style="left:533.50px;top:317.21px;width:43.75px;height:16.92px;line-height:16.92px;">0.00</div>
<div class="t d c" style="left:577.25px;top:317.21px;width:50.75px;height:16.92px;line-height:16.92px;">3.00</div>
<div class="t d c" style="left:628.00px;top:317.21px;width:49.50px;height:16.92px;line-height:16.92px;">15.00</div>
<div class="t d c" style="left:677.50px;top:317.21px;width:60.00px;height:16.92px;line-height:16.92px;">0.00</div>
<div class="t d c" style="left:737.50px;top:317.21px;width:45.75px;height:16.92px;line-height:16.92px;">27.00</div>
<div class="t d r a" style="left:819.00px;top:316.71px;width:137.75px;height:16.92px;line-height:16.92px;">تيشرت رجالى نص</div>
<div class="t d r" style="left:950.75px;top:317.21px;width:34.25px;height:16.92px;line-height:16.92px;">33</div>
<div class="t d c" style="left:989.00px;top:317.21px;width:28.50px;height:16.92px;line-height:16.92px;">6</div>
<div class="t d r" style="left:11.25px;top:334.13px;width:52.65px;height:16.92px;line-height:16.92px;">130</div>
<div class="t d r" style="left:57.90px;top:334.13px;width:55.35px;height:16.92px;line-height:16.92px;">90</div>
<div class="t d r" style="left:107.25px;top:334.13px;width:50.15px;height:16.92px;line-height:16.92px;">117</div>
<div class="t d r" style="left:151.40px;top:334.13px;width:48.00px;height:16.92px;line-height:16.92px;">2085</div>
<div class="t d r" style="left:193.40px;top:334.13px;width:59.00px;height:16.92px;line-height:16.92px;">30/05/2020</div>
<div class="t d r" style="left:246.40px;top:334.13px;width:49.35px;height:16.92px;line-height:16.92px;">11,200.00</div>
<div class="t d r" style="left:289.75px;top:334.13px;width:47.00px;height:16.92px;line-height:16.92px;">0.00</div>
<div class="t d c" style="left:340.75px;top:334.13px;width:55.50px;height:16.92px;line-height:16.92px;">0.00</div>
<div class="t d c" style="left:396.25px;top:334.13px;width:54.35px;height:16.92px;line-height:16.92px;">0.00</div>
<div class="t d c" style="left:450.60px;top:334.13px;width:43.15px;height:16.92px;line-height:16.92px;">0.00</div>
<div class="t d c" style="left:493.75px;top:334.13px;width:39.75px;height:16.92px;line-height:16.92px;">0.00</div>
<div class="t d c" style="left:533.50px;top:334.13px;width:43.75px;height:16.92px;line-height:16.92px;">0.00</div>
<div class="t d c" style="left:577.25px;top:334.13px;width:50.75px;height:16.92px;line-height:16.92px;">0.00</div>
<div class="t d c" style="left:628.00px;top:334.13px;width:49.50px;height:16.92px;line-height:16.92px;">11,200.00</div>
<div class="t d c" style="left:677.50px;top:334.13px;width:60.00px;height:16.92px;line-height:16.92px;">0.00</div>
<div class="t d c" style="left:737.50px;top:334.13px;width:45.75px;height:16.92px;line-height:16.92px;">0.00</div>
<div class="t d r a" style="left:819.00px;top:333.63px;width:137.75px;height:16.92px;line-height:16.92px;">تيشرت نص كود</div>
<div class="t d r" style="left:950.75px;top:334.13px;width:34.25px;height:16.92px;line-height:16.92px;">1</div>
<div class="t d c" style="left:989.00px;top:334.13px;width:28.50px;height:16.92px;line-height:16.92px;">2</div>
<div class="t d r" style="left:11.25px;top:351.05px;width:52.65px;height:16.92px;line-height:16.92px;">625</div>
<div class="t d r" style="left:57.90px;top:351.05px;width:55.35px;height:16.92px;line-height:16.92px;">450</div>
<div class="t d r" style="left:107.25px;top:351.05px;width:50.15px;height:16.92px;line-height:16.92px;">747</div>
<div class="t d r" style="left:151.40px;top:351.05px;width:48.00px;height:16.92px;line-height:16.92px;">429</div>
<div class="t d r" style="left:193.40px;top:351.05px;width:59.00px;height:16.92px;line-height:16.92px;">11/12/2024</div>
<div class="t d r" style="left:246.40px;top:351.05px;width:49.35px;height:16.92px;line-height:16.92px;">474.00</div>
<div class="t d r" style="left:289.75px;top:351.05px;width:47.00px;height:16.92px;line-height:16.92px;">0.00</div>
<div class="t d c" style="left:340.75px;top:351.05px;width:55.50px;height:16.92px;line-height:16.92px;">0.00</div>
<div class="t d c" style="left:396.25px;top:351.05px;width:54.35px;height:16.92px;line-height:16.92px;">0.00</div>
<div class="t d c" style="left:450.60px;top:351.05px;width:43.15px;height:16.92px;line-height:16.92px;">0.00</div>
<div class="t d c" style="left:493.75px;top:351.05px;width:39.75px;height:16.92px;line-height:16.92px;">4.00</div>
<div class="t d c" style="left:533.50px;top:351.05px;width:43.75px;height:16.92px;line-height:16.92px;">0.00</div>
<div class="t d c" style="left:577.25px;top:351.05px;width:50.75px;height:16.92px;line-height:16.92px;">2.00</div>
<div class="t d c" style="left:628.00px;top:351.05px;width:49.50px;height:16.92px;line-height:16.92px;">0.00</div>
<div class="t d c" style="left:677.50px;top:351.05px;width:60.00px;height:16.92px;line-height:16.92px;">0.00</div>
<div class="t d c" style="left:737.50px;top:351.05px;width:45.75px;height:16.92px;line-height:16.92px;">480.00</div>
<div class="t d r a" style="left:819.00px;top:350.55px;width:137.75px;height:16.92px;line-height:16.92px;">جييبيب</div>
<div class="t d r" style="left:950.75px;top:351.05px;width:34.25px;height:16.92px;line-height:16.92px;">65</div>
<div class="t d c" style="left:989.00px;top:351.05px;width:28.50px;height:16.92px;line-height:16.92px;">15</div>
<div class="t d r" style="left:11.25px;top:367.97px;width:52.65px;height:16.92px;line-height:16.92px;">0</div>
<div class="t d r" style="left:57.90px;top:367.97px;width:55.35px;height:16.92px;line-height:16.92px;">0</div>
<div class="t d r" style="left:107.25px;top:367.97px;width:50.15px;height:16.92px;line-height:16.92px;">0</div>
<div class="t d r" style="left:246.40px;top:367.97px;width:49.35px;height:16.92px;line-height:16.92px;">10.00-</div>
<div class="t d r" style="left:289.75px;top:367.97px;width:47.00px;height:16.92px;line-height:16.92px;">10.00-</div>
<div class="t d c" style="left:340.75px;top:367.97px;width:55.50px;height:16.92px;line-height:16.92px;">0.00</div>
<div class="t d c" style="left:396.25px;top:367.97px;width:54.35px;height:16.92px;line-height:16.92px;">0.00</div>
<div class="t d c" style="left:450.60px;top:367.97px;width:43.15px;height:16.92px;line-height:16.92px;">0.00</div>
<div class="t d c" style="left:493.75px;top:367.97px;width:39.75px;height:16.92px;line-height:16.92px;">0.00</div>
<div class="t d c" style="left:533.50px;top:367.97px;width:43.75px;height:16.92px;line-height:16.92px;">0.00</div>
<div class="t d c" style="left:577.25px;top:367.97px;width:50.75px;height:16.92px;line-height:16.92px;">0.00</div>
<div class="t d c" style="left:628.00px;top:367.97px;width:49.50px;height:16.92px;line-height:16.92px;">0.00</div>
<div class="t d c" style="left:677.50px;top:367.97px;width:60.00px;height:16.92px;line-height:16.92px;">0.00</div>
<div class="t d c" style="left:737.50px;top:367.97px;width:45.75px;height:16.92px;line-height:16.92px;">0.00</div>
<div class="t d r a" style="left:819.00px;top:367.47px;width:137.75px;height:16.92px;line-height:16.92px;">فازا</div>
<div class="t d c" style="left:989.00px;top:367.97px;width:28.50px;height:16.92px;line-height:16.92px;">31568</div>
<div class="t d r" style="left:11.25px;top:384.90px;width:52.65px;height:16.92px;line-height:16.92px;">600</div>
<div class="t d r" style="left:57.90px;top:384.90px;width:55.35px;height:16.92px;line-height:16.92px;">100</div>
<div class="t d r" style="left:107.25px;top:384.90px;width:50.15px;height:16.92px;line-height:16.92px;">117</div>
<div class="t d r" style="left:151.40px;top:384.90px;width:48.00px;height:16.92px;line-height:16.92px;">0</div>
<div class="t d r" style="left:193.40px;top:384.90px;width:59.00px;height:16.92px;line-height:16.92px;">13/02/2026</div>
<div class="t d r" style="left:246.40px;top:384.90px;width:49.35px;height:16.92px;line-height:16.92px;">5,677.00</div>
<div class="t d r" style="left:289.75px;top:384.90px;width:47.00px;height:16.92px;line-height:16.92px;">7,455.15-</div>
<div class="t d c" style="left:340.75px;top:384.90px;width:55.50px;height:16.92px;line-height:16.92px;">14.00</div>
<div class="t d c" style="left:396.25px;top:384.90px;width:54.35px;height:16.92px;line-height:16.92px;">12.00</div>
<div class="t d c" style="left:450.60px;top:384.90px;width:43.15px;height:16.92px;line-height:16.92px;">62.00</div>
<div class="t d c" style="left:493.75px;top:384.90px;width:39.75px;height:16.92px;line-height:16.92px;">241.00</div>
<div class="t d c" style="left:533.50px;top:384.90px;width:43.75px;height:16.92px;line-height:16.92px;">29.00</div>
<div class="t d c" style="left:577.25px;top:384.90px;width:50.75px;height:16.92px;line-height:16.92px;">813.66</div>
<div class="t d c" style="left:628.00px;top:384.90px;width:49.50px;height:16.92px;line-height:16.92px;">8,720.81</div>
<div class="t d c" style="left:677.50px;top:384.90px;width:60.00px;height:16.92px;line-height:16.92px;">18.00</div>
<div class="t d c" style="left:737.50px;top:384.90px;width:45.75px;height:16.92px;line-height:16.92px;">5,395.00</div>
<div class="t d r a" style="left:819.00px;top:384.40px;width:137.75px;height:16.92px;line-height:16.92px;">فستنان الوانتتت</div>
<div class="t d r" style="left:950.75px;top:384.90px;width:34.25px;height:16.92px;line-height:16.92px;">1</div>
<div class="t d c" style="left:989.00px;top:384.90px;width:28.50px;height:16.92px;line-height:16.92px;">1</div>
<div class="t d r" style="left:11.25px;top:401.82px;width:52.65px;height:16.92px;line-height:16.92px;">2000</div>
<div class="t d r" style="left:57.90px;top:401.82px;width:55.35px;height:16.92px;line-height:16.92px;">1000</div>
<div class="t d r" style="left:107.25px;top:401.82px;width:50.15px;height:16.92px;line-height:16.92px;">1500</div>
<div class="t d r" style="left:246.40px;top:401.82px;width:49.35px;height:16.92px;line-height:16.92px;">19.00</div>
<div class="t d r" style="left:289.75px;top:401.82px;width:47.00px;height:16.92px;line-height:16.92px;">0.00</div>
<div class="t d c" style="left:340.75px;top:401.82px;width:55.50px;height:16.92px;line-height:16.92px;">0.00</div>
<div class="t d c" style="left:396.25px;top:401.82px;width:54.35px;height:16.92px;line-height:16.92px;">0.00</div>
<div class="t d c" style="left:450.60px;top:401.82px;width:43.15px;height:16.92px;line-height:16.92px;">0.00</div>
<div class="t d c" style="left:493.75px;top:401.82px;width:39.75px;height:16.92px;line-height:16.92px;">1.00</div>
<div class="t d c" style="left:533.50px;top:401.82px;width:43.75px;height:16.92px;line-height:16.92px;">0.00</div>
<div class="t d c" style="left:577.25px;top:401.82px;width:50.75px;height:16.92px;line-height:16.92px;">0.00</div>
<div class="t d c" style="left:628.00px;top:401.82px;width:49.50px;height:16.92px;line-height:16.92px;">20.00</div>
<div class="t d c" style="left:677.50px;top:401.82px;width:60.00px;height:16.92px;line-height:16.92px;">0.00</div>
<div class="t d c" style="left:737.50px;top:401.82px;width:45.75px;height:16.92px;line-height:16.92px;">0.00</div>
<div class="t d r a" style="left:819.00px;top:401.32px;width:137.75px;height:16.92px;line-height:16.92px;">نتتنسنىن</div>
<div class="t d r" style="left:950.75px;top:401.82px;width:34.25px;height:16.92px;line-height:16.92px;">23</div>
<div class="t d c" style="left:989.00px;top:401.82px;width:28.50px;height:16.92px;line-height:16.92px;">37</div>
<div class="t d r" style="left:11.25px;top:418.74px;width:52.65px;height:16.92px;line-height:16.92px;">125</div>
<div class="t d r" style="left:57.90px;top:418.74px;width:55.35px;height:16.92px;line-height:16.92px;">100</div>
<div class="t d r" style="left:107.25px;top:418.74px;width:50.15px;height:16.92px;line-height:16.92px;">130</div>
<div class="t d r" style="left:151.40px;top:418.74px;width:48.00px;height:16.92px;line-height:16.92px;">3408</div>
<div class="t d r" style="left:193.40px;top:418.74px;width:59.00px;height:16.92px;line-height:16.92px;">15/10/2016</div>
<div class="t d r" style="left:246.40px;top:418.74px;width:49.35px;height:16.92px;line-height:16.92px;">11.00</div>
<div class="t d r" style="left:289.75px;top:418.74px;width:47.00px;height:16.92px;line-height:16.92px;">0.00</div>
<div class="t d c" style="left:340.75px;top:418.74px;width:55.50px;height:16.92px;line-height:16.92px;">0.00</div>
<div class="t d c" style="left:396.25px;top:418.74px;width:54.35px;height:16.92px;line-height:16.92px;">0.00</div>
<div class="t d c" style="left:450.60px;top:418.74px;width:43.15px;height:16.92px;line-height:16.92px;">0.00</div>
<div class="t d c" style="left:493.75px;top:418.74px;width:39.75px;height:16.92px;line-height:16.92px;">2.00</div>
<div class="t d c" style="left:533.50px;top:418.74px;width:43.75px;height:16.92px;line-height:16.92px;">0.00</div>
<div class="t d c" style="left:577.25px;top:418.74px;width:50.75px;height:16.92px;line-height:16.92px;">0.00</div>
<div class="t d c" style="left:628.00px;top:418.74px;width:49.50px;height:16.92px;line-height:16.92px;">0.00</div>
<div class="t d c" style="left:677.50px;top:418.74px;width:60.00px;height:16.92px;line-height:16.92px;">0.00</div>
<div class="t d c" style="left:737.50px;top:418.74px;width:45.75px;height:16.92px;line-height:16.92px;">13.00</div>
<div class="t d r a" style="left:819.00px;top:418.24px;width:137.75px;height:16.92px;line-height:16.92px;">نواقص</div>
<div class="t d r" style="left:950.75px;top:418.74px;width:34.25px;height:16.92px;line-height:16.92px;">52</div>
<div class="t d c" style="left:989.00px;top:418.74px;width:28.50px;height:16.92px;line-height:16.92px;">36</div>
<div class="t d r" style="left:246.40px;top:435.66px;width:49.35px;height:16.92px;line-height:16.92px;">19,747.00</div>
<div class="t d r" style="left:289.75px;top:435.66px;width:47.00px;height:16.92px;line-height:16.92px;">7,465.15-</div>
<div class="t d c" style="left:340.75px;top:435.66px;width:55.50px;height:16.92px;line-height:16.92px;">65.00</div>
<div class="t d c" style="left:396.25px;top:435.66px;width:54.35px;height:16.92px;line-height:16.92px;">45.00</div>
<div class="t d c" style="left:450.60px;top:435.66px;width:43.15px;height:16.92px;line-height:16.92px;">64.00</div>
<div class="t d c" style="left:493.75px;top:435.66px;width:39.75px;height:16.92px;line-height:16.92px;">313.00</div>
<div class="t d c" style="left:533.50px;top:435.66px;width:43.75px;height:16.92px;line-height:16.92px;">29.00</div>
<div class="t d c" style="left:577.25px;top:435.66px;width:50.75px;height:16.92px;line-height:16.92px;">818.66</div>
<div class="t d c" style="left:628.00px;top:435.66px;width:49.50px;height:16.92px;line-height:16.92px;">22,074.81</div>
<div class="t d c" style="left:677.50px;top:435.66px;width:60.00px;height:16.92px;line-height:16.92px;">23.00</div>
<div class="t d c" style="left:737.50px;top:435.66px;width:45.75px;height:16.92px;line-height:16.92px;">6,219.00</div>
<div class="t lb" style="left:998.00px;top:21.50px;width:20.00px;height:12.00px;line-height:12.00px;">الفرع</div>
<div class="t bt" style="left:795.00px;top:21.00px;width:59.60px;height:12.00px;line-height:12.00px;">عرض</div>
<div class="t gb" style="left:613.30px;top:20.00px;width:158.20px;height:12.00px;line-height:12.00px;">فلاتر البحث</div>
<div class="t gb" style="left:521.40px;top:20.00px;width:73.50px;height:12.00px;line-height:12.00px;">الطباعة</div>
<div class="t gb" style="left:408.00px;top:482.00px;width:200.00px;height:12.40px;line-height:12.40px;font-size:7.7px">العرض التفصيلى</div>
<div class="t ti" style="left:890.00px;top:-2.20px;width:78.00px;height:11.00px;line-height:11.00px;">التقرير العام - RepBig</div>
</body></html>
